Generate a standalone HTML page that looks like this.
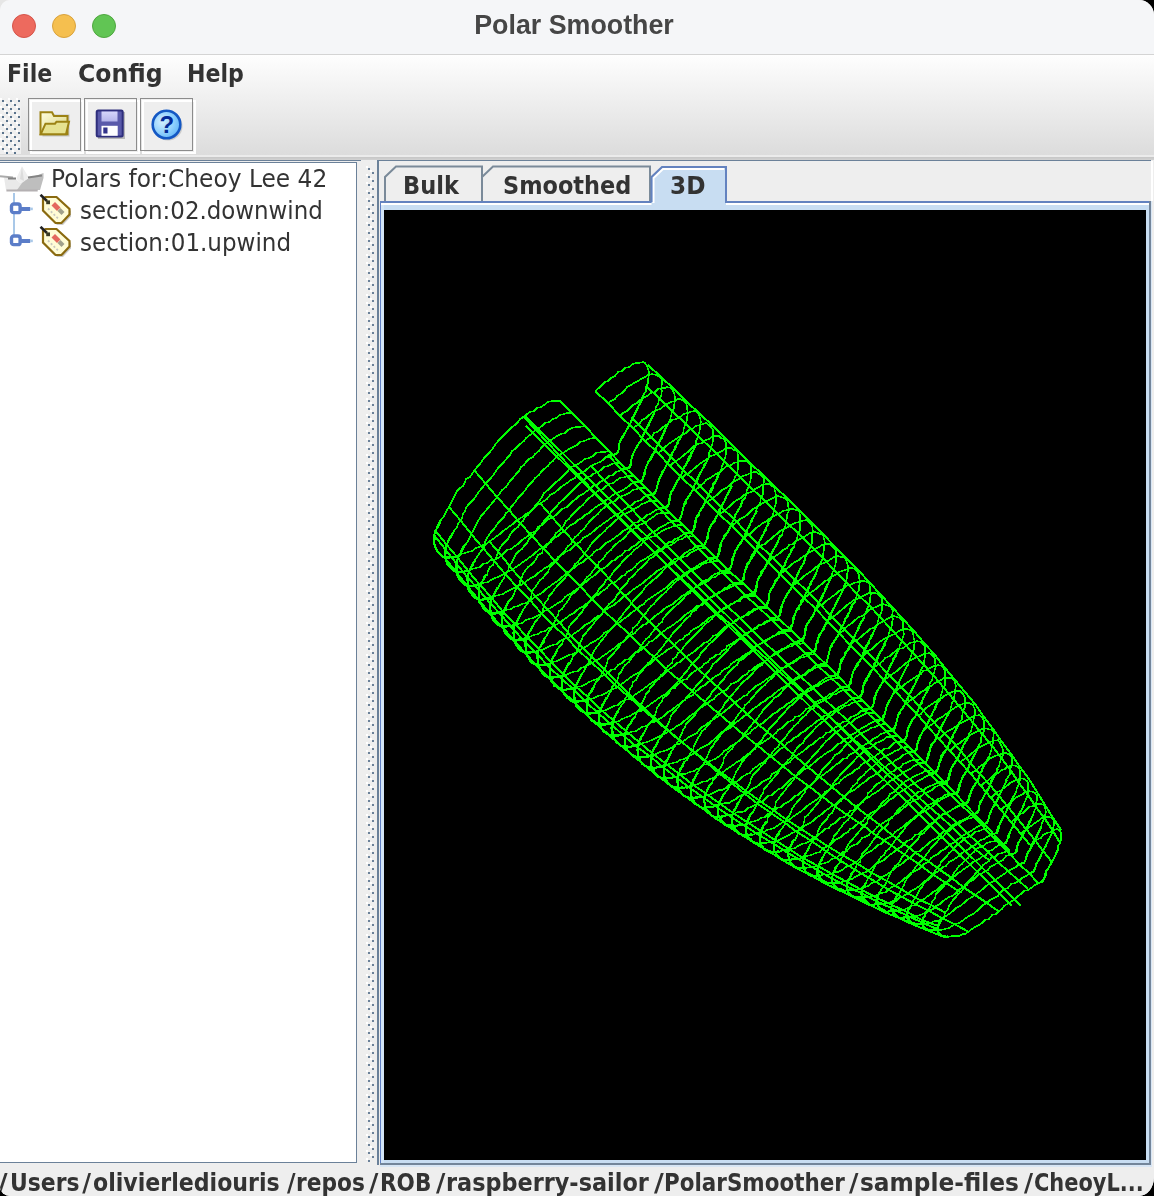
<!DOCTYPE html>
<html><head><meta charset="utf-8"><title>Polar Smoother</title>
<style>
html,body{margin:0;padding:0;}
body{width:1154px;height:1196px;overflow:hidden;background:#000;position:relative;font-family:"DejaVu Sans","Liberation Sans",sans-serif;color:#333;}
#win{position:absolute;left:0;top:0;width:1154px;height:1196px;background:#eee;border-radius:10px 15px 15px 10px / 10px 15px 19px 9px;overflow:hidden;}
#tl{position:absolute;left:0;top:0;width:40px;height:40px;background:#e6e6e6;}
.abs{position:absolute;}
#title{left:0;top:0;width:1154px;height:54px;background:#f5f6f8;border-bottom:1px solid #d4d4d4;}
#title .t{position:absolute;left:0;width:1148px;top:9px;text-align:center;font:bold 26.8px/32px "Liberation Sans",sans-serif;color:#464646;filter:grayscale(1);}
.dot{position:absolute;top:14px;width:24px;height:24px;border-radius:50%;box-sizing:border-box;}
#grad{left:0;top:55px;width:1154px;height:100px;background:linear-gradient(#fefefe 0%,#dcdcdc 100%);}
#menubar{left:0;top:55px;width:1154px;height:40px;}
.mi{position:absolute;top:3px;filter:grayscale(1);font-weight:bold;font-size:24px;line-height:32px;white-space:nowrap;transform-origin:0 50%;}
#toolbar{left:0;top:95px;width:1154px;height:61px;}
.tbw{position:absolute;top:4.5px;width:54px;height:54px;box-sizing:border-box;border:2px solid #fff;background:#eee;}
.tb{position:absolute;top:3px;width:53px;height:53px;box-sizing:border-box;border:1.5px solid #8c8c8c;}
.tb svg{position:absolute;left:0;top:0;}
#tree{left:0;top:163px;width:356px;height:999px;background:#fff;border-right:1px solid #6b8199;border-bottom:1px solid #6b8199;}
.row{filter:grayscale(1);position:absolute;left:0;height:32px;font-size:24px;line-height:32px;white-space:nowrap;transform-origin:0 50%;}
#status{left:0;top:1167px;width:1154px;height:29px;background:#eee;}
#status .w{position:absolute;top:0px;filter:grayscale(1);font-weight:bold;font-size:24px;line-height:32px;white-space:nowrap;transform-origin:0 50%;}
.tabtxt{filter:grayscale(1);position:absolute;top:170px;font-weight:bold;font-size:24px;line-height:32px;white-space:nowrap;transform-origin:0 50%;}
</style></head><body>
<div id="tl"></div>
<div id="win">
<div id="title" class="abs">
 <div class="dot" style="left:12px;background:#ed6a5e;border:1px solid #d5544a;"></div>
 <div class="dot" style="left:52px;background:#f5bf4f;border:1px solid #d9a23c;"></div>
 <div class="dot" style="left:92px;background:#61c554;border:1px solid #4ea73f;"></div>
 <div class="t">Polar Smoother</div>
</div>
<div id="grad" class="abs"></div>
<div id="menubar" class="abs">
 <span class="mi" id="m1" style="left:7.48px;transform:scaleX(0.919);">File</span>
 <span class="mi" id="m2" style="left:77.72px;transform:scaleX(0.9807);">Config</span>
 <span class="mi" id="m3" style="left:187.18px;transform:scaleX(0.9197);">Help</span>
</div>
<div id="toolbar" class="abs">
 <div class="abs" style="left:0;top:3px;width:21px;height:56px;background:#efefef;"></div><svg class="abs" style="left:0;top:3px" width="22" height="60" viewBox="0 0 22 60"><g><rect x="0" y="0" width="2" height="2" fill="#fff"/><rect x="2" y="2" width="2" height="2" fill="#5a738c"/><rect x="8" y="0" width="2" height="2" fill="#fff"/><rect x="10" y="2" width="2" height="2" fill="#5a738c"/><rect x="16" y="0" width="2" height="2" fill="#fff"/><rect x="18" y="2" width="2" height="2" fill="#5a738c"/><rect x="4" y="4" width="2" height="2" fill="#fff"/><rect x="6" y="6" width="2" height="2" fill="#5a738c"/><rect x="12" y="4" width="2" height="2" fill="#fff"/><rect x="14" y="6" width="2" height="2" fill="#5a738c"/><rect x="0" y="8" width="2" height="2" fill="#fff"/><rect x="2" y="10" width="2" height="2" fill="#5a738c"/><rect x="8" y="8" width="2" height="2" fill="#fff"/><rect x="10" y="10" width="2" height="2" fill="#5a738c"/><rect x="16" y="8" width="2" height="2" fill="#fff"/><rect x="18" y="10" width="2" height="2" fill="#5a738c"/><rect x="4" y="12" width="2" height="2" fill="#fff"/><rect x="6" y="14" width="2" height="2" fill="#5a738c"/><rect x="12" y="12" width="2" height="2" fill="#fff"/><rect x="14" y="14" width="2" height="2" fill="#5a738c"/><rect x="0" y="16" width="2" height="2" fill="#fff"/><rect x="2" y="18" width="2" height="2" fill="#5a738c"/><rect x="8" y="16" width="2" height="2" fill="#fff"/><rect x="10" y="18" width="2" height="2" fill="#5a738c"/><rect x="16" y="16" width="2" height="2" fill="#fff"/><rect x="18" y="18" width="2" height="2" fill="#5a738c"/><rect x="4" y="20" width="2" height="2" fill="#fff"/><rect x="6" y="22" width="2" height="2" fill="#5a738c"/><rect x="12" y="20" width="2" height="2" fill="#fff"/><rect x="14" y="22" width="2" height="2" fill="#5a738c"/><rect x="0" y="24" width="2" height="2" fill="#fff"/><rect x="2" y="26" width="2" height="2" fill="#5a738c"/><rect x="8" y="24" width="2" height="2" fill="#fff"/><rect x="10" y="26" width="2" height="2" fill="#5a738c"/><rect x="16" y="24" width="2" height="2" fill="#fff"/><rect x="18" y="26" width="2" height="2" fill="#5a738c"/><rect x="4" y="28" width="2" height="2" fill="#fff"/><rect x="6" y="30" width="2" height="2" fill="#5a738c"/><rect x="12" y="28" width="2" height="2" fill="#fff"/><rect x="14" y="30" width="2" height="2" fill="#5a738c"/><rect x="0" y="32" width="2" height="2" fill="#fff"/><rect x="2" y="34" width="2" height="2" fill="#5a738c"/><rect x="8" y="32" width="2" height="2" fill="#fff"/><rect x="10" y="34" width="2" height="2" fill="#5a738c"/><rect x="16" y="32" width="2" height="2" fill="#fff"/><rect x="18" y="34" width="2" height="2" fill="#5a738c"/><rect x="4" y="36" width="2" height="2" fill="#fff"/><rect x="6" y="38" width="2" height="2" fill="#5a738c"/><rect x="12" y="36" width="2" height="2" fill="#fff"/><rect x="14" y="38" width="2" height="2" fill="#5a738c"/><rect x="0" y="40" width="2" height="2" fill="#fff"/><rect x="2" y="42" width="2" height="2" fill="#5a738c"/><rect x="8" y="40" width="2" height="2" fill="#fff"/><rect x="10" y="42" width="2" height="2" fill="#5a738c"/><rect x="16" y="40" width="2" height="2" fill="#fff"/><rect x="18" y="42" width="2" height="2" fill="#5a738c"/><rect x="4" y="44" width="2" height="2" fill="#fff"/><rect x="6" y="46" width="2" height="2" fill="#5a738c"/><rect x="12" y="44" width="2" height="2" fill="#fff"/><rect x="14" y="46" width="2" height="2" fill="#5a738c"/><rect x="0" y="48" width="2" height="2" fill="#fff"/><rect x="2" y="50" width="2" height="2" fill="#5a738c"/><rect x="8" y="48" width="2" height="2" fill="#fff"/><rect x="10" y="50" width="2" height="2" fill="#5a738c"/><rect x="16" y="48" width="2" height="2" fill="#fff"/><rect x="18" y="50" width="2" height="2" fill="#5a738c"/><rect x="4" y="52" width="2" height="2" fill="#fff"/><rect x="6" y="54" width="2" height="2" fill="#5a738c"/><rect x="12" y="52" width="2" height="2" fill="#fff"/><rect x="14" y="54" width="2" height="2" fill="#5a738c"/></g></svg>
 <div class="tbw" style="left:29.5px;"></div><div class="tb" style="left:28px;"><svg width="50" height="50" viewBox="1.5 1.5 50 50">
  <defs><linearGradient id="fg" x1="0" y1="0" x2="1" y2="1"><stop offset="0" stop-color="#fffde0"/><stop offset="1" stop-color="#d8d47c"/></linearGradient></defs>
  <path d="M15 17 h27 v22 h-27 z" fill="#777" opacity=".35"/>
  <path d="M13 14.8 h11.5 l2 3.6 h13.5 v18.4 h-27 z" fill="url(#fg)" stroke="#9c8214" stroke-width="2" stroke-linejoin="miter"/>
  <path d="M18 26.2 L27.5 26.2 L29 24.2 L41.5 24.2 L38.5 36.8 L13.2 36.8 Z" fill="#e6e290" stroke="#9c8214" stroke-width="2" stroke-linejoin="miter"/>
 </svg></div>
 <div class="tbw" style="left:85.5px;"></div><div class="tb" style="left:84px;"><svg width="50" height="50" viewBox="1.5 1.5 50 50">
  <defs><linearGradient id="lg" x1="0" y1="0" x2="0" y2="1"><stop offset="0" stop-color="#d6d6fa"/><stop offset="1" stop-color="#b4b4ea"/></linearGradient></defs>
  <rect x="14.5" y="14.5" width="27" height="27" fill="#666" opacity=".4"/>
  <rect x="13.2" y="13" width="26" height="26" rx="1.5" fill="#5a5aaa" stroke="#2e2e7c" stroke-width="2"/>
  <rect x="18" y="14" width="16" height="10" fill="url(#lg)"/>
  <rect x="18" y="28.3" width="16.2" height="10" fill="#ffffff"/>
  <rect x="19.8" y="30" width="4.2" height="6" fill="#33338a"/>
 </svg></div>
 <div class="tbw" style="left:141.5px;"></div><div class="tb" style="left:140px;"><svg width="50" height="50" viewBox="1.5 1.5 50 50">
  <defs><radialGradient id="hg" cx="35%" cy="40%" r="75%"><stop offset="0" stop-color="#d4efff"/><stop offset=".55" stop-color="#8fd0fd"/><stop offset="1" stop-color="#5ab0f6"/></radialGradient></defs>
  <ellipse cx="28.5" cy="28.5" rx="14.5" ry="14.5" fill="#777" opacity=".3"/>
  <circle cx="27" cy="27" r="13.8" fill="url(#hg)" stroke="#1458c4" stroke-width="2.6"/>
  <text x="27.3" y="35.3" text-anchor="middle" font-family="Liberation Sans,sans-serif" font-weight="bold" font-size="24" fill="#022a98">?</text>
 </svg></div>
</div>
<!-- separators under toolbar -->
<div class="abs" style="left:0;top:155px;width:1154px;height:2px;background:#ebebeb;"></div>
<div class="abs" style="left:0;top:157px;width:1154px;height:3px;background:linear-gradient(#c6c6c6,#d2d2d2);"></div>
<div class="abs" style="left:0;top:160px;width:1154px;height:4px;background:#eee;"></div>
<div class="abs" style="left:0;top:160px;width:361px;height:1px;background:#6b8199;"></div>
<div class="abs" style="left:377px;top:160px;width:774px;height:1px;background:#6b8199;"></div>
<div class="abs" style="left:0;top:162px;width:357px;height:1px;background:#6b8199;"></div>
<div id="tree" class="abs">
 <!-- boat icon -->
 <svg class="abs" style="left:0;top:2px" width="46" height="28" viewBox="0 0 46 28">
  <path d="M4 12.5 L16 14 L20 18 L28 14 L43 11 L40 25 L6 25 Z" fill="#e9e9e9"/>
  <path d="M22 1.2 L16.5 13 L19 18 L24 17 L28.5 12 Z" fill="#eeeeee"/>
  <path d="M22 1.2 L20 14 L24 16 Z" fill="#dcdcdc"/>
  <path d="M22 18 L28 13.5 L43.5 8 L43.5 13 L40 25 L17 25 Z" fill="#bebebe"/>
  <path d="M0 11.2 L13 12.6" stroke="#ababab" stroke-width="2"/>
  <path d="M8 13.4 L16 13.6 M28 12.6 L42 10.4" stroke="#848484" stroke-width="2"/>
  <path d="M6.4 25.5 L37.7 25.5" stroke="#b4b0b2" stroke-width="1.8"/>
 </svg>
 <!-- tree lines -->
 <div class="abs" style="left:13px;top:30px;width:2px;height:44px;background:#a9c8e8;"></div>
 <svg class="abs" style="left:8px;top:39px" width="26" height="16" viewBox="0 0 26 16"><use href="#hdl"/></svg>
 <svg class="abs" style="left:8px;top:71px" width="26" height="16" viewBox="0 0 26 16"><use href="#hdl"/></svg>
 <!-- tag icons -->
 <svg class="abs" style="left:38px;top:31px" width="36" height="34" viewBox="0 0 36 34"><use href="#tag"/></svg>
 <svg class="abs" style="left:38px;top:63px" width="36" height="34" viewBox="0 0 36 34"><use href="#tag"/></svg>
 <div class="row" id="r1" style="left:51.37px;top:0px;transform:scaleX(0.9721);">Polars for:Cheoy Lee 42</div>
 <div class="row" id="r2" style="left:80.46px;top:32px;transform:scaleX(0.9553);">section:02.downwind</div>
 <div class="row" id="r3" style="left:80.45px;top:64px;transform:scaleX(0.9598);">section:01.upwind</div>
</div>
<svg width="0" height="0" style="position:absolute"><defs>
 <g id="tag">
  <path d="M9 5 L20 5 L33 17 L33 22.5 L25 31 L19 31 L7 19 L7 7 Z" fill="#8c8c8c" opacity=".45"/>
  <path d="M7.7 3 L18.5 3 L31.5 15 L31.5 20.5 L23.5 29 L17.5 29 L5 16.5 L5 4.5 Z" fill="#fffcd6" stroke="#8a6a10" stroke-width="2.2" stroke-linejoin="miter"/>
  <path d="M2.5 0.8 L9 7" stroke="#222" stroke-width="2.6"/>
  <rect x="8.2" y="6.4" width="3.8" height="3.8" fill="#3a3a24"/>
  <path d="M17 8 L22.5 13.5 L19 17 L13.5 11.5 Z" fill="#e4685e"/>
  <path d="M22.5 14 L26.5 18 L23.5 21 L19.5 17 Z" fill="#a0a08c"/>
  <path d="M10 14.5 L20 24.5" stroke="#c8c8c0" stroke-width="1.8" stroke-dasharray="2 2"/>
 </g>
 <g id="hdl">
  <rect x="3.5" y="2" width="8.6" height="8.6" rx="2.2" fill="#fff" stroke="#5b7dc8" stroke-width="3.4"/>
  <rect x="12" y="5" width="10.2" height="4" fill="#5b7dc8"/>
  <rect x="22.2" y="5.6" width="2.6" height="2.6" fill="#a9c8e8"/>
 </g>
</defs></svg>
<!-- split divider -->
<div class="abs" style="left:357px;top:163px;width:21px;height:1000px;background:#eee;"></div>
<svg class="abs" style="left:365px;top:166px" width="12" height="996" viewBox="0 0 12 996"><g><rect x="1" y="0" width="2" height="2" fill="#fff"/><rect x="3" y="2" width="2" height="2" fill="#6b8199"/><rect x="5" y="4" width="2" height="2" fill="#fff"/><rect x="7" y="6" width="2" height="2" fill="#6b8199"/><rect x="1" y="8" width="2" height="2" fill="#fff"/><rect x="3" y="10" width="2" height="2" fill="#6b8199"/><rect x="5" y="12" width="2" height="2" fill="#fff"/><rect x="7" y="14" width="2" height="2" fill="#6b8199"/><rect x="1" y="16" width="2" height="2" fill="#fff"/><rect x="3" y="18" width="2" height="2" fill="#6b8199"/><rect x="5" y="20" width="2" height="2" fill="#fff"/><rect x="7" y="22" width="2" height="2" fill="#6b8199"/><rect x="1" y="24" width="2" height="2" fill="#fff"/><rect x="3" y="26" width="2" height="2" fill="#6b8199"/><rect x="5" y="28" width="2" height="2" fill="#fff"/><rect x="7" y="30" width="2" height="2" fill="#6b8199"/><rect x="1" y="32" width="2" height="2" fill="#fff"/><rect x="3" y="34" width="2" height="2" fill="#6b8199"/><rect x="5" y="36" width="2" height="2" fill="#fff"/><rect x="7" y="38" width="2" height="2" fill="#6b8199"/><rect x="1" y="40" width="2" height="2" fill="#fff"/><rect x="3" y="42" width="2" height="2" fill="#6b8199"/><rect x="5" y="44" width="2" height="2" fill="#fff"/><rect x="7" y="46" width="2" height="2" fill="#6b8199"/><rect x="1" y="48" width="2" height="2" fill="#fff"/><rect x="3" y="50" width="2" height="2" fill="#6b8199"/><rect x="5" y="52" width="2" height="2" fill="#fff"/><rect x="7" y="54" width="2" height="2" fill="#6b8199"/><rect x="1" y="56" width="2" height="2" fill="#fff"/><rect x="3" y="58" width="2" height="2" fill="#6b8199"/><rect x="5" y="60" width="2" height="2" fill="#fff"/><rect x="7" y="62" width="2" height="2" fill="#6b8199"/><rect x="1" y="64" width="2" height="2" fill="#fff"/><rect x="3" y="66" width="2" height="2" fill="#6b8199"/><rect x="5" y="68" width="2" height="2" fill="#fff"/><rect x="7" y="70" width="2" height="2" fill="#6b8199"/><rect x="1" y="72" width="2" height="2" fill="#fff"/><rect x="3" y="74" width="2" height="2" fill="#6b8199"/><rect x="5" y="76" width="2" height="2" fill="#fff"/><rect x="7" y="78" width="2" height="2" fill="#6b8199"/><rect x="1" y="80" width="2" height="2" fill="#fff"/><rect x="3" y="82" width="2" height="2" fill="#6b8199"/><rect x="5" y="84" width="2" height="2" fill="#fff"/><rect x="7" y="86" width="2" height="2" fill="#6b8199"/><rect x="1" y="88" width="2" height="2" fill="#fff"/><rect x="3" y="90" width="2" height="2" fill="#6b8199"/><rect x="5" y="92" width="2" height="2" fill="#fff"/><rect x="7" y="94" width="2" height="2" fill="#6b8199"/><rect x="1" y="96" width="2" height="2" fill="#fff"/><rect x="3" y="98" width="2" height="2" fill="#6b8199"/><rect x="5" y="100" width="2" height="2" fill="#fff"/><rect x="7" y="102" width="2" height="2" fill="#6b8199"/><rect x="1" y="104" width="2" height="2" fill="#fff"/><rect x="3" y="106" width="2" height="2" fill="#6b8199"/><rect x="5" y="108" width="2" height="2" fill="#fff"/><rect x="7" y="110" width="2" height="2" fill="#6b8199"/><rect x="1" y="112" width="2" height="2" fill="#fff"/><rect x="3" y="114" width="2" height="2" fill="#6b8199"/><rect x="5" y="116" width="2" height="2" fill="#fff"/><rect x="7" y="118" width="2" height="2" fill="#6b8199"/><rect x="1" y="120" width="2" height="2" fill="#fff"/><rect x="3" y="122" width="2" height="2" fill="#6b8199"/><rect x="5" y="124" width="2" height="2" fill="#fff"/><rect x="7" y="126" width="2" height="2" fill="#6b8199"/><rect x="1" y="128" width="2" height="2" fill="#fff"/><rect x="3" y="130" width="2" height="2" fill="#6b8199"/><rect x="5" y="132" width="2" height="2" fill="#fff"/><rect x="7" y="134" width="2" height="2" fill="#6b8199"/><rect x="1" y="136" width="2" height="2" fill="#fff"/><rect x="3" y="138" width="2" height="2" fill="#6b8199"/><rect x="5" y="140" width="2" height="2" fill="#fff"/><rect x="7" y="142" width="2" height="2" fill="#6b8199"/><rect x="1" y="144" width="2" height="2" fill="#fff"/><rect x="3" y="146" width="2" height="2" fill="#6b8199"/><rect x="5" y="148" width="2" height="2" fill="#fff"/><rect x="7" y="150" width="2" height="2" fill="#6b8199"/><rect x="1" y="152" width="2" height="2" fill="#fff"/><rect x="3" y="154" width="2" height="2" fill="#6b8199"/><rect x="5" y="156" width="2" height="2" fill="#fff"/><rect x="7" y="158" width="2" height="2" fill="#6b8199"/><rect x="1" y="160" width="2" height="2" fill="#fff"/><rect x="3" y="162" width="2" height="2" fill="#6b8199"/><rect x="5" y="164" width="2" height="2" fill="#fff"/><rect x="7" y="166" width="2" height="2" fill="#6b8199"/><rect x="1" y="168" width="2" height="2" fill="#fff"/><rect x="3" y="170" width="2" height="2" fill="#6b8199"/><rect x="5" y="172" width="2" height="2" fill="#fff"/><rect x="7" y="174" width="2" height="2" fill="#6b8199"/><rect x="1" y="176" width="2" height="2" fill="#fff"/><rect x="3" y="178" width="2" height="2" fill="#6b8199"/><rect x="5" y="180" width="2" height="2" fill="#fff"/><rect x="7" y="182" width="2" height="2" fill="#6b8199"/><rect x="1" y="184" width="2" height="2" fill="#fff"/><rect x="3" y="186" width="2" height="2" fill="#6b8199"/><rect x="5" y="188" width="2" height="2" fill="#fff"/><rect x="7" y="190" width="2" height="2" fill="#6b8199"/><rect x="1" y="192" width="2" height="2" fill="#fff"/><rect x="3" y="194" width="2" height="2" fill="#6b8199"/><rect x="5" y="196" width="2" height="2" fill="#fff"/><rect x="7" y="198" width="2" height="2" fill="#6b8199"/><rect x="1" y="200" width="2" height="2" fill="#fff"/><rect x="3" y="202" width="2" height="2" fill="#6b8199"/><rect x="5" y="204" width="2" height="2" fill="#fff"/><rect x="7" y="206" width="2" height="2" fill="#6b8199"/><rect x="1" y="208" width="2" height="2" fill="#fff"/><rect x="3" y="210" width="2" height="2" fill="#6b8199"/><rect x="5" y="212" width="2" height="2" fill="#fff"/><rect x="7" y="214" width="2" height="2" fill="#6b8199"/><rect x="1" y="216" width="2" height="2" fill="#fff"/><rect x="3" y="218" width="2" height="2" fill="#6b8199"/><rect x="5" y="220" width="2" height="2" fill="#fff"/><rect x="7" y="222" width="2" height="2" fill="#6b8199"/><rect x="1" y="224" width="2" height="2" fill="#fff"/><rect x="3" y="226" width="2" height="2" fill="#6b8199"/><rect x="5" y="228" width="2" height="2" fill="#fff"/><rect x="7" y="230" width="2" height="2" fill="#6b8199"/><rect x="1" y="232" width="2" height="2" fill="#fff"/><rect x="3" y="234" width="2" height="2" fill="#6b8199"/><rect x="5" y="236" width="2" height="2" fill="#fff"/><rect x="7" y="238" width="2" height="2" fill="#6b8199"/><rect x="1" y="240" width="2" height="2" fill="#fff"/><rect x="3" y="242" width="2" height="2" fill="#6b8199"/><rect x="5" y="244" width="2" height="2" fill="#fff"/><rect x="7" y="246" width="2" height="2" fill="#6b8199"/><rect x="1" y="248" width="2" height="2" fill="#fff"/><rect x="3" y="250" width="2" height="2" fill="#6b8199"/><rect x="5" y="252" width="2" height="2" fill="#fff"/><rect x="7" y="254" width="2" height="2" fill="#6b8199"/><rect x="1" y="256" width="2" height="2" fill="#fff"/><rect x="3" y="258" width="2" height="2" fill="#6b8199"/><rect x="5" y="260" width="2" height="2" fill="#fff"/><rect x="7" y="262" width="2" height="2" fill="#6b8199"/><rect x="1" y="264" width="2" height="2" fill="#fff"/><rect x="3" y="266" width="2" height="2" fill="#6b8199"/><rect x="5" y="268" width="2" height="2" fill="#fff"/><rect x="7" y="270" width="2" height="2" fill="#6b8199"/><rect x="1" y="272" width="2" height="2" fill="#fff"/><rect x="3" y="274" width="2" height="2" fill="#6b8199"/><rect x="5" y="276" width="2" height="2" fill="#fff"/><rect x="7" y="278" width="2" height="2" fill="#6b8199"/><rect x="1" y="280" width="2" height="2" fill="#fff"/><rect x="3" y="282" width="2" height="2" fill="#6b8199"/><rect x="5" y="284" width="2" height="2" fill="#fff"/><rect x="7" y="286" width="2" height="2" fill="#6b8199"/><rect x="1" y="288" width="2" height="2" fill="#fff"/><rect x="3" y="290" width="2" height="2" fill="#6b8199"/><rect x="5" y="292" width="2" height="2" fill="#fff"/><rect x="7" y="294" width="2" height="2" fill="#6b8199"/><rect x="1" y="296" width="2" height="2" fill="#fff"/><rect x="3" y="298" width="2" height="2" fill="#6b8199"/><rect x="5" y="300" width="2" height="2" fill="#fff"/><rect x="7" y="302" width="2" height="2" fill="#6b8199"/><rect x="1" y="304" width="2" height="2" fill="#fff"/><rect x="3" y="306" width="2" height="2" fill="#6b8199"/><rect x="5" y="308" width="2" height="2" fill="#fff"/><rect x="7" y="310" width="2" height="2" fill="#6b8199"/><rect x="1" y="312" width="2" height="2" fill="#fff"/><rect x="3" y="314" width="2" height="2" fill="#6b8199"/><rect x="5" y="316" width="2" height="2" fill="#fff"/><rect x="7" y="318" width="2" height="2" fill="#6b8199"/><rect x="1" y="320" width="2" height="2" fill="#fff"/><rect x="3" y="322" width="2" height="2" fill="#6b8199"/><rect x="5" y="324" width="2" height="2" fill="#fff"/><rect x="7" y="326" width="2" height="2" fill="#6b8199"/><rect x="1" y="328" width="2" height="2" fill="#fff"/><rect x="3" y="330" width="2" height="2" fill="#6b8199"/><rect x="5" y="332" width="2" height="2" fill="#fff"/><rect x="7" y="334" width="2" height="2" fill="#6b8199"/><rect x="1" y="336" width="2" height="2" fill="#fff"/><rect x="3" y="338" width="2" height="2" fill="#6b8199"/><rect x="5" y="340" width="2" height="2" fill="#fff"/><rect x="7" y="342" width="2" height="2" fill="#6b8199"/><rect x="1" y="344" width="2" height="2" fill="#fff"/><rect x="3" y="346" width="2" height="2" fill="#6b8199"/><rect x="5" y="348" width="2" height="2" fill="#fff"/><rect x="7" y="350" width="2" height="2" fill="#6b8199"/><rect x="1" y="352" width="2" height="2" fill="#fff"/><rect x="3" y="354" width="2" height="2" fill="#6b8199"/><rect x="5" y="356" width="2" height="2" fill="#fff"/><rect x="7" y="358" width="2" height="2" fill="#6b8199"/><rect x="1" y="360" width="2" height="2" fill="#fff"/><rect x="3" y="362" width="2" height="2" fill="#6b8199"/><rect x="5" y="364" width="2" height="2" fill="#fff"/><rect x="7" y="366" width="2" height="2" fill="#6b8199"/><rect x="1" y="368" width="2" height="2" fill="#fff"/><rect x="3" y="370" width="2" height="2" fill="#6b8199"/><rect x="5" y="372" width="2" height="2" fill="#fff"/><rect x="7" y="374" width="2" height="2" fill="#6b8199"/><rect x="1" y="376" width="2" height="2" fill="#fff"/><rect x="3" y="378" width="2" height="2" fill="#6b8199"/><rect x="5" y="380" width="2" height="2" fill="#fff"/><rect x="7" y="382" width="2" height="2" fill="#6b8199"/><rect x="1" y="384" width="2" height="2" fill="#fff"/><rect x="3" y="386" width="2" height="2" fill="#6b8199"/><rect x="5" y="388" width="2" height="2" fill="#fff"/><rect x="7" y="390" width="2" height="2" fill="#6b8199"/><rect x="1" y="392" width="2" height="2" fill="#fff"/><rect x="3" y="394" width="2" height="2" fill="#6b8199"/><rect x="5" y="396" width="2" height="2" fill="#fff"/><rect x="7" y="398" width="2" height="2" fill="#6b8199"/><rect x="1" y="400" width="2" height="2" fill="#fff"/><rect x="3" y="402" width="2" height="2" fill="#6b8199"/><rect x="5" y="404" width="2" height="2" fill="#fff"/><rect x="7" y="406" width="2" height="2" fill="#6b8199"/><rect x="1" y="408" width="2" height="2" fill="#fff"/><rect x="3" y="410" width="2" height="2" fill="#6b8199"/><rect x="5" y="412" width="2" height="2" fill="#fff"/><rect x="7" y="414" width="2" height="2" fill="#6b8199"/><rect x="1" y="416" width="2" height="2" fill="#fff"/><rect x="3" y="418" width="2" height="2" fill="#6b8199"/><rect x="5" y="420" width="2" height="2" fill="#fff"/><rect x="7" y="422" width="2" height="2" fill="#6b8199"/><rect x="1" y="424" width="2" height="2" fill="#fff"/><rect x="3" y="426" width="2" height="2" fill="#6b8199"/><rect x="5" y="428" width="2" height="2" fill="#fff"/><rect x="7" y="430" width="2" height="2" fill="#6b8199"/><rect x="1" y="432" width="2" height="2" fill="#fff"/><rect x="3" y="434" width="2" height="2" fill="#6b8199"/><rect x="5" y="436" width="2" height="2" fill="#fff"/><rect x="7" y="438" width="2" height="2" fill="#6b8199"/><rect x="1" y="440" width="2" height="2" fill="#fff"/><rect x="3" y="442" width="2" height="2" fill="#6b8199"/><rect x="5" y="444" width="2" height="2" fill="#fff"/><rect x="7" y="446" width="2" height="2" fill="#6b8199"/><rect x="1" y="448" width="2" height="2" fill="#fff"/><rect x="3" y="450" width="2" height="2" fill="#6b8199"/><rect x="5" y="452" width="2" height="2" fill="#fff"/><rect x="7" y="454" width="2" height="2" fill="#6b8199"/><rect x="1" y="456" width="2" height="2" fill="#fff"/><rect x="3" y="458" width="2" height="2" fill="#6b8199"/><rect x="5" y="460" width="2" height="2" fill="#fff"/><rect x="7" y="462" width="2" height="2" fill="#6b8199"/><rect x="1" y="464" width="2" height="2" fill="#fff"/><rect x="3" y="466" width="2" height="2" fill="#6b8199"/><rect x="5" y="468" width="2" height="2" fill="#fff"/><rect x="7" y="470" width="2" height="2" fill="#6b8199"/><rect x="1" y="472" width="2" height="2" fill="#fff"/><rect x="3" y="474" width="2" height="2" fill="#6b8199"/><rect x="5" y="476" width="2" height="2" fill="#fff"/><rect x="7" y="478" width="2" height="2" fill="#6b8199"/><rect x="1" y="480" width="2" height="2" fill="#fff"/><rect x="3" y="482" width="2" height="2" fill="#6b8199"/><rect x="5" y="484" width="2" height="2" fill="#fff"/><rect x="7" y="486" width="2" height="2" fill="#6b8199"/><rect x="1" y="488" width="2" height="2" fill="#fff"/><rect x="3" y="490" width="2" height="2" fill="#6b8199"/><rect x="5" y="492" width="2" height="2" fill="#fff"/><rect x="7" y="494" width="2" height="2" fill="#6b8199"/><rect x="1" y="496" width="2" height="2" fill="#fff"/><rect x="3" y="498" width="2" height="2" fill="#6b8199"/><rect x="5" y="500" width="2" height="2" fill="#fff"/><rect x="7" y="502" width="2" height="2" fill="#6b8199"/><rect x="1" y="504" width="2" height="2" fill="#fff"/><rect x="3" y="506" width="2" height="2" fill="#6b8199"/><rect x="5" y="508" width="2" height="2" fill="#fff"/><rect x="7" y="510" width="2" height="2" fill="#6b8199"/><rect x="1" y="512" width="2" height="2" fill="#fff"/><rect x="3" y="514" width="2" height="2" fill="#6b8199"/><rect x="5" y="516" width="2" height="2" fill="#fff"/><rect x="7" y="518" width="2" height="2" fill="#6b8199"/><rect x="1" y="520" width="2" height="2" fill="#fff"/><rect x="3" y="522" width="2" height="2" fill="#6b8199"/><rect x="5" y="524" width="2" height="2" fill="#fff"/><rect x="7" y="526" width="2" height="2" fill="#6b8199"/><rect x="1" y="528" width="2" height="2" fill="#fff"/><rect x="3" y="530" width="2" height="2" fill="#6b8199"/><rect x="5" y="532" width="2" height="2" fill="#fff"/><rect x="7" y="534" width="2" height="2" fill="#6b8199"/><rect x="1" y="536" width="2" height="2" fill="#fff"/><rect x="3" y="538" width="2" height="2" fill="#6b8199"/><rect x="5" y="540" width="2" height="2" fill="#fff"/><rect x="7" y="542" width="2" height="2" fill="#6b8199"/><rect x="1" y="544" width="2" height="2" fill="#fff"/><rect x="3" y="546" width="2" height="2" fill="#6b8199"/><rect x="5" y="548" width="2" height="2" fill="#fff"/><rect x="7" y="550" width="2" height="2" fill="#6b8199"/><rect x="1" y="552" width="2" height="2" fill="#fff"/><rect x="3" y="554" width="2" height="2" fill="#6b8199"/><rect x="5" y="556" width="2" height="2" fill="#fff"/><rect x="7" y="558" width="2" height="2" fill="#6b8199"/><rect x="1" y="560" width="2" height="2" fill="#fff"/><rect x="3" y="562" width="2" height="2" fill="#6b8199"/><rect x="5" y="564" width="2" height="2" fill="#fff"/><rect x="7" y="566" width="2" height="2" fill="#6b8199"/><rect x="1" y="568" width="2" height="2" fill="#fff"/><rect x="3" y="570" width="2" height="2" fill="#6b8199"/><rect x="5" y="572" width="2" height="2" fill="#fff"/><rect x="7" y="574" width="2" height="2" fill="#6b8199"/><rect x="1" y="576" width="2" height="2" fill="#fff"/><rect x="3" y="578" width="2" height="2" fill="#6b8199"/><rect x="5" y="580" width="2" height="2" fill="#fff"/><rect x="7" y="582" width="2" height="2" fill="#6b8199"/><rect x="1" y="584" width="2" height="2" fill="#fff"/><rect x="3" y="586" width="2" height="2" fill="#6b8199"/><rect x="5" y="588" width="2" height="2" fill="#fff"/><rect x="7" y="590" width="2" height="2" fill="#6b8199"/><rect x="1" y="592" width="2" height="2" fill="#fff"/><rect x="3" y="594" width="2" height="2" fill="#6b8199"/><rect x="5" y="596" width="2" height="2" fill="#fff"/><rect x="7" y="598" width="2" height="2" fill="#6b8199"/><rect x="1" y="600" width="2" height="2" fill="#fff"/><rect x="3" y="602" width="2" height="2" fill="#6b8199"/><rect x="5" y="604" width="2" height="2" fill="#fff"/><rect x="7" y="606" width="2" height="2" fill="#6b8199"/><rect x="1" y="608" width="2" height="2" fill="#fff"/><rect x="3" y="610" width="2" height="2" fill="#6b8199"/><rect x="5" y="612" width="2" height="2" fill="#fff"/><rect x="7" y="614" width="2" height="2" fill="#6b8199"/><rect x="1" y="616" width="2" height="2" fill="#fff"/><rect x="3" y="618" width="2" height="2" fill="#6b8199"/><rect x="5" y="620" width="2" height="2" fill="#fff"/><rect x="7" y="622" width="2" height="2" fill="#6b8199"/><rect x="1" y="624" width="2" height="2" fill="#fff"/><rect x="3" y="626" width="2" height="2" fill="#6b8199"/><rect x="5" y="628" width="2" height="2" fill="#fff"/><rect x="7" y="630" width="2" height="2" fill="#6b8199"/><rect x="1" y="632" width="2" height="2" fill="#fff"/><rect x="3" y="634" width="2" height="2" fill="#6b8199"/><rect x="5" y="636" width="2" height="2" fill="#fff"/><rect x="7" y="638" width="2" height="2" fill="#6b8199"/><rect x="1" y="640" width="2" height="2" fill="#fff"/><rect x="3" y="642" width="2" height="2" fill="#6b8199"/><rect x="5" y="644" width="2" height="2" fill="#fff"/><rect x="7" y="646" width="2" height="2" fill="#6b8199"/><rect x="1" y="648" width="2" height="2" fill="#fff"/><rect x="3" y="650" width="2" height="2" fill="#6b8199"/><rect x="5" y="652" width="2" height="2" fill="#fff"/><rect x="7" y="654" width="2" height="2" fill="#6b8199"/><rect x="1" y="656" width="2" height="2" fill="#fff"/><rect x="3" y="658" width="2" height="2" fill="#6b8199"/><rect x="5" y="660" width="2" height="2" fill="#fff"/><rect x="7" y="662" width="2" height="2" fill="#6b8199"/><rect x="1" y="664" width="2" height="2" fill="#fff"/><rect x="3" y="666" width="2" height="2" fill="#6b8199"/><rect x="5" y="668" width="2" height="2" fill="#fff"/><rect x="7" y="670" width="2" height="2" fill="#6b8199"/><rect x="1" y="672" width="2" height="2" fill="#fff"/><rect x="3" y="674" width="2" height="2" fill="#6b8199"/><rect x="5" y="676" width="2" height="2" fill="#fff"/><rect x="7" y="678" width="2" height="2" fill="#6b8199"/><rect x="1" y="680" width="2" height="2" fill="#fff"/><rect x="3" y="682" width="2" height="2" fill="#6b8199"/><rect x="5" y="684" width="2" height="2" fill="#fff"/><rect x="7" y="686" width="2" height="2" fill="#6b8199"/><rect x="1" y="688" width="2" height="2" fill="#fff"/><rect x="3" y="690" width="2" height="2" fill="#6b8199"/><rect x="5" y="692" width="2" height="2" fill="#fff"/><rect x="7" y="694" width="2" height="2" fill="#6b8199"/><rect x="1" y="696" width="2" height="2" fill="#fff"/><rect x="3" y="698" width="2" height="2" fill="#6b8199"/><rect x="5" y="700" width="2" height="2" fill="#fff"/><rect x="7" y="702" width="2" height="2" fill="#6b8199"/><rect x="1" y="704" width="2" height="2" fill="#fff"/><rect x="3" y="706" width="2" height="2" fill="#6b8199"/><rect x="5" y="708" width="2" height="2" fill="#fff"/><rect x="7" y="710" width="2" height="2" fill="#6b8199"/><rect x="1" y="712" width="2" height="2" fill="#fff"/><rect x="3" y="714" width="2" height="2" fill="#6b8199"/><rect x="5" y="716" width="2" height="2" fill="#fff"/><rect x="7" y="718" width="2" height="2" fill="#6b8199"/><rect x="1" y="720" width="2" height="2" fill="#fff"/><rect x="3" y="722" width="2" height="2" fill="#6b8199"/><rect x="5" y="724" width="2" height="2" fill="#fff"/><rect x="7" y="726" width="2" height="2" fill="#6b8199"/><rect x="1" y="728" width="2" height="2" fill="#fff"/><rect x="3" y="730" width="2" height="2" fill="#6b8199"/><rect x="5" y="732" width="2" height="2" fill="#fff"/><rect x="7" y="734" width="2" height="2" fill="#6b8199"/><rect x="1" y="736" width="2" height="2" fill="#fff"/><rect x="3" y="738" width="2" height="2" fill="#6b8199"/><rect x="5" y="740" width="2" height="2" fill="#fff"/><rect x="7" y="742" width="2" height="2" fill="#6b8199"/><rect x="1" y="744" width="2" height="2" fill="#fff"/><rect x="3" y="746" width="2" height="2" fill="#6b8199"/><rect x="5" y="748" width="2" height="2" fill="#fff"/><rect x="7" y="750" width="2" height="2" fill="#6b8199"/><rect x="1" y="752" width="2" height="2" fill="#fff"/><rect x="3" y="754" width="2" height="2" fill="#6b8199"/><rect x="5" y="756" width="2" height="2" fill="#fff"/><rect x="7" y="758" width="2" height="2" fill="#6b8199"/><rect x="1" y="760" width="2" height="2" fill="#fff"/><rect x="3" y="762" width="2" height="2" fill="#6b8199"/><rect x="5" y="764" width="2" height="2" fill="#fff"/><rect x="7" y="766" width="2" height="2" fill="#6b8199"/><rect x="1" y="768" width="2" height="2" fill="#fff"/><rect x="3" y="770" width="2" height="2" fill="#6b8199"/><rect x="5" y="772" width="2" height="2" fill="#fff"/><rect x="7" y="774" width="2" height="2" fill="#6b8199"/><rect x="1" y="776" width="2" height="2" fill="#fff"/><rect x="3" y="778" width="2" height="2" fill="#6b8199"/><rect x="5" y="780" width="2" height="2" fill="#fff"/><rect x="7" y="782" width="2" height="2" fill="#6b8199"/><rect x="1" y="784" width="2" height="2" fill="#fff"/><rect x="3" y="786" width="2" height="2" fill="#6b8199"/><rect x="5" y="788" width="2" height="2" fill="#fff"/><rect x="7" y="790" width="2" height="2" fill="#6b8199"/><rect x="1" y="792" width="2" height="2" fill="#fff"/><rect x="3" y="794" width="2" height="2" fill="#6b8199"/><rect x="5" y="796" width="2" height="2" fill="#fff"/><rect x="7" y="798" width="2" height="2" fill="#6b8199"/><rect x="1" y="800" width="2" height="2" fill="#fff"/><rect x="3" y="802" width="2" height="2" fill="#6b8199"/><rect x="5" y="804" width="2" height="2" fill="#fff"/><rect x="7" y="806" width="2" height="2" fill="#6b8199"/><rect x="1" y="808" width="2" height="2" fill="#fff"/><rect x="3" y="810" width="2" height="2" fill="#6b8199"/><rect x="5" y="812" width="2" height="2" fill="#fff"/><rect x="7" y="814" width="2" height="2" fill="#6b8199"/><rect x="1" y="816" width="2" height="2" fill="#fff"/><rect x="3" y="818" width="2" height="2" fill="#6b8199"/><rect x="5" y="820" width="2" height="2" fill="#fff"/><rect x="7" y="822" width="2" height="2" fill="#6b8199"/><rect x="1" y="824" width="2" height="2" fill="#fff"/><rect x="3" y="826" width="2" height="2" fill="#6b8199"/><rect x="5" y="828" width="2" height="2" fill="#fff"/><rect x="7" y="830" width="2" height="2" fill="#6b8199"/><rect x="1" y="832" width="2" height="2" fill="#fff"/><rect x="3" y="834" width="2" height="2" fill="#6b8199"/><rect x="5" y="836" width="2" height="2" fill="#fff"/><rect x="7" y="838" width="2" height="2" fill="#6b8199"/><rect x="1" y="840" width="2" height="2" fill="#fff"/><rect x="3" y="842" width="2" height="2" fill="#6b8199"/><rect x="5" y="844" width="2" height="2" fill="#fff"/><rect x="7" y="846" width="2" height="2" fill="#6b8199"/><rect x="1" y="848" width="2" height="2" fill="#fff"/><rect x="3" y="850" width="2" height="2" fill="#6b8199"/><rect x="5" y="852" width="2" height="2" fill="#fff"/><rect x="7" y="854" width="2" height="2" fill="#6b8199"/><rect x="1" y="856" width="2" height="2" fill="#fff"/><rect x="3" y="858" width="2" height="2" fill="#6b8199"/><rect x="5" y="860" width="2" height="2" fill="#fff"/><rect x="7" y="862" width="2" height="2" fill="#6b8199"/><rect x="1" y="864" width="2" height="2" fill="#fff"/><rect x="3" y="866" width="2" height="2" fill="#6b8199"/><rect x="5" y="868" width="2" height="2" fill="#fff"/><rect x="7" y="870" width="2" height="2" fill="#6b8199"/><rect x="1" y="872" width="2" height="2" fill="#fff"/><rect x="3" y="874" width="2" height="2" fill="#6b8199"/><rect x="5" y="876" width="2" height="2" fill="#fff"/><rect x="7" y="878" width="2" height="2" fill="#6b8199"/><rect x="1" y="880" width="2" height="2" fill="#fff"/><rect x="3" y="882" width="2" height="2" fill="#6b8199"/><rect x="5" y="884" width="2" height="2" fill="#fff"/><rect x="7" y="886" width="2" height="2" fill="#6b8199"/><rect x="1" y="888" width="2" height="2" fill="#fff"/><rect x="3" y="890" width="2" height="2" fill="#6b8199"/><rect x="5" y="892" width="2" height="2" fill="#fff"/><rect x="7" y="894" width="2" height="2" fill="#6b8199"/><rect x="1" y="896" width="2" height="2" fill="#fff"/><rect x="3" y="898" width="2" height="2" fill="#6b8199"/><rect x="5" y="900" width="2" height="2" fill="#fff"/><rect x="7" y="902" width="2" height="2" fill="#6b8199"/><rect x="1" y="904" width="2" height="2" fill="#fff"/><rect x="3" y="906" width="2" height="2" fill="#6b8199"/><rect x="5" y="908" width="2" height="2" fill="#fff"/><rect x="7" y="910" width="2" height="2" fill="#6b8199"/><rect x="1" y="912" width="2" height="2" fill="#fff"/><rect x="3" y="914" width="2" height="2" fill="#6b8199"/><rect x="5" y="916" width="2" height="2" fill="#fff"/><rect x="7" y="918" width="2" height="2" fill="#6b8199"/><rect x="1" y="920" width="2" height="2" fill="#fff"/><rect x="3" y="922" width="2" height="2" fill="#6b8199"/><rect x="5" y="924" width="2" height="2" fill="#fff"/><rect x="7" y="926" width="2" height="2" fill="#6b8199"/><rect x="1" y="928" width="2" height="2" fill="#fff"/><rect x="3" y="930" width="2" height="2" fill="#6b8199"/><rect x="5" y="932" width="2" height="2" fill="#fff"/><rect x="7" y="934" width="2" height="2" fill="#6b8199"/><rect x="1" y="936" width="2" height="2" fill="#fff"/><rect x="3" y="938" width="2" height="2" fill="#6b8199"/><rect x="5" y="940" width="2" height="2" fill="#fff"/><rect x="7" y="942" width="2" height="2" fill="#6b8199"/><rect x="1" y="944" width="2" height="2" fill="#fff"/><rect x="3" y="946" width="2" height="2" fill="#6b8199"/><rect x="5" y="948" width="2" height="2" fill="#fff"/><rect x="7" y="950" width="2" height="2" fill="#6b8199"/><rect x="1" y="952" width="2" height="2" fill="#fff"/><rect x="3" y="954" width="2" height="2" fill="#6b8199"/><rect x="5" y="956" width="2" height="2" fill="#fff"/><rect x="7" y="958" width="2" height="2" fill="#6b8199"/><rect x="1" y="960" width="2" height="2" fill="#fff"/><rect x="3" y="962" width="2" height="2" fill="#6b8199"/><rect x="5" y="964" width="2" height="2" fill="#fff"/><rect x="7" y="966" width="2" height="2" fill="#6b8199"/><rect x="1" y="968" width="2" height="2" fill="#fff"/><rect x="3" y="970" width="2" height="2" fill="#6b8199"/><rect x="5" y="972" width="2" height="2" fill="#fff"/><rect x="7" y="974" width="2" height="2" fill="#6b8199"/><rect x="1" y="976" width="2" height="2" fill="#fff"/><rect x="3" y="978" width="2" height="2" fill="#6b8199"/><rect x="5" y="980" width="2" height="2" fill="#fff"/><rect x="7" y="982" width="2" height="2" fill="#6b8199"/><rect x="1" y="984" width="2" height="2" fill="#fff"/><rect x="3" y="986" width="2" height="2" fill="#6b8199"/><rect x="5" y="988" width="2" height="2" fill="#fff"/><rect x="7" y="990" width="2" height="2" fill="#6b8199"/><rect x="1" y="992" width="2" height="2" fill="#fff"/><rect x="3" y="994" width="2" height="2" fill="#6b8199"/></g></svg>
<!-- tabbed pane outer border -->
<div class="abs" style="left:377px;top:160px;width:1.5px;height:1005px;background:#6b8199;"></div>
<!-- content area -->
<div class="abs" style="left:380px;top:201px;width:772px;height:965.5px;background:#d8e6f5;"></div>
<div class="abs" style="left:380px;top:201px;width:771px;height:964px;background:#c8ddf2;"></div>
<div class="abs" style="left:381px;top:203px;width:3px;height:960px;background:#d3e5f7;"></div>
<div class="abs" style="left:380px;top:201px;width:769px;height:2px;background:#5876b8;"></div>
<div class="abs" style="left:381px;top:203px;width:768px;height:2px;background:#fff;"></div>
<div class="abs" style="left:380px;top:201px;width:1px;height:964px;background:#5f7fc4;"></div>
<div class="abs" style="left:1149px;top:201px;width:2px;height:964px;background:#73859a;"></div>
<div class="abs" style="left:380px;top:1163px;width:771px;height:2px;background:#73859a;"></div>
<div class="abs" style="left:1151px;top:161px;width:2px;height:40px;background:#fff;"></div>
<!-- tabs -->
<svg class="abs" style="left:380px;top:163px" width="774" height="42" viewBox="0 0 774 42">
 <!-- Bulk -->
 <path d="M5 39 L5 14 L16 3.5 L102 3.5 L102 39" fill="#eeeeee" stroke="#7a8a99" stroke-width="2"/>
 <!-- Smoothed -->
 <path d="M102 14 L113 3.5 L270 3.5 L270 39" fill="#eeeeee" stroke="#7a8a99" stroke-width="2"/>
 <!-- baseline left of selected -->
 <path d="M0 39 L272 39" stroke="#6382bf" stroke-width="2"/>
 <!-- 3D selected -->
 <path d="M271.5 42 L271.5 14 L282 4 L346 4 L346 42 Z" fill="#c8ddf2"/>
 <path d="M273.5 40 L273.5 15 L283 6 L344 6" fill="none" stroke="#fff" stroke-width="2"/>
 <path d="M271.5 39 L271.5 14 L282 4 L346 4 L346 39 L769 39" fill="none" stroke="#6382bf" stroke-width="2"/>
</svg>
<span class="tabtxt" id="t1" style="left:402.94px;transform:scaleX(0.9377);">Bulk</span>
<span class="tabtxt" id="t2" style="left:502.91px;transform:scaleX(0.9341);">Smoothed</span>
<span class="tabtxt" id="t3" style="left:670.45px;transform:scaleX(0.9675);">3D</span>
<!-- black canvas -->
<div class="abs" style="left:384px;top:210px;width:762px;height:950px;background:#000;"></div>
<svg class="abs" style="left:384px;top:210px" width="762" height="950" viewBox="384 210 762 950" shape-rendering="crispEdges"><path d="M560 401 L556 401 L552 401 L548 402 L544 405 L541 407 L537 408 L534 411 L530 412 L527 414 L524 417 L520 419 L518 422 L515 425 L512 427 L509 430 L506 433 L503 436 L501 438 L498 441 L495 445 L493 448 L490 452 L487 455 L484 458 L482 461 L480 464 L477 467 L474 471 L472 474 L470 477 L466 479 L465 482 L463 486 L460 488 L457 491 L455 495 L453 499 L451 503 L449 507 L447 510 L445 514 L444 516 L441 520 L440 523 L438 527 L435 531 L434 535 L435 539 L434 543 L435 546 L437 550 L439 553 L442 556 L445 557 L449 557 L453 557 L458 556 L461 554 L465 553 L468 552 L472 551 L476 548 L479 547 L483 545 L486 544 L490 541 L493 539 L497 536 L500 534 L503 531 L506 529 L510 526 L513 524 L516 521 L519 519 L524 516 L526 514 L530 512 L534 508 L536 506 L541 503 L544 501 L547 499 L550 495 L554 493 L558 490 L561 487 L564 485 L567 483 L571 480 L575 478 L577 475 L581 473 L585 471 L587 469 L591 466 L595 464 L600 462 L603 460 L606 457 L609 457 L613 455 L616 454 L618 451 L619 448 L619 444 L620 441 L623 437 L625 433 L627 429 L629 425 L631 422 L632 418 L634 416 L636 412 L638 408 L639 405 L640 402 L642 398 L644 394 L646 391 L646 387 L648 383 L648 379 L649 375 L649 372 L648 369 L647 366 L645 363 L643 362 L639 363 L636 363 L633 364 L629 367 L625 368 L622 371 L618 372 L615 376 L611 378 L608 381 L605 382 L602 385 L599 388 L595 391 M572 413 L567 413 L564 414 L560 415 L556 418 L553 419 L549 422 L545 423 L542 426 L539 428 L535 430 L533 433 L530 435 L526 438 L524 441 L520 444 L518 446 L515 449 L512 451 L510 455 L507 458 L504 462 L501 465 L498 468 L496 471 L494 474 L491 478 L488 481 L486 483 L483 487 L481 489 L478 493 L476 496 L474 499 L471 502 L468 505 L466 508 L465 511 L463 514 L462 518 L460 521 L458 524 L457 527 L454 531 L452 534 L451 537 L448 541 L447 545 L446 549 L446 553 L445 557 L446 561 L447 564 L450 567 L453 570 L457 571 L460 572 L465 571 L469 571 L472 569 L476 568 L480 567 L483 564 L487 563 L491 560 L494 560 L498 558 L501 556 L504 553 L507 550 L511 549 L515 546 L518 544 L522 540 L525 538 L528 536 L531 533 L536 531 L538 527 L542 525 L545 522 L549 519 L553 517 L556 515 L559 512 L562 509 L567 507 L570 504 L573 501 L576 499 L579 496 L583 494 L587 491 L590 489 L593 486 L597 485 L600 482 L604 480 L607 478 L609 476 L613 475 L616 472 L619 471 L621 470 L625 468 L629 467 L630 465 L631 462 L632 457 L633 454 L635 450 L637 447 L640 442 L642 439 L643 435 L645 431 L646 429 L649 425 L650 422 L652 418 L654 414 L655 411 L656 407 L658 404 L659 400 L661 396 L662 391 L661 389 L662 384 L662 380 L660 377 L658 376 L656 375 L652 374 L648 375 L645 377 L641 379 L638 381 L634 383 L631 385 L627 387 L625 390 L622 393 L617 396 L615 399 L611 401 L608 403 M585 426 L580 427 L576 427 L572 428 L568 430 L565 433 L561 434 L557 436 L554 438 L551 440 L548 442 L544 445 L541 448 L539 451 L535 454 L533 457 L529 459 L526 462 L524 465 L521 467 L519 471 L516 474 L513 478 L510 481 L508 484 L506 487 L502 490 L500 493 L497 497 L494 501 L492 503 L489 507 L487 509 L484 513 L481 516 L480 518 L478 521 L476 525 L474 529 L473 531 L471 534 L470 537 L468 541 L466 544 L463 547 L461 551 L460 555 L458 558 L457 562 L457 567 L457 571 L457 574 L459 578 L461 581 L464 584 L468 586 L472 586 L476 585 L479 585 L483 583 L488 582 L491 580 L495 578 L498 577 L502 575 L506 573 L509 571 L512 570 L516 567 L519 565 L523 562 L526 560 L530 557 L533 555 L536 552 L540 549 L544 547 L547 544 L551 542 L554 538 L558 536 L561 533 L565 531 L567 528 L571 525 L575 523 L578 520 L582 518 L585 515 L589 513 L592 510 L596 507 L599 505 L603 503 L606 500 L609 498 L613 495 L616 493 L619 492 L623 490 L626 488 L629 486 L631 484 L634 483 L638 481 L641 481 L643 478 L645 474 L645 470 L646 467 L648 462 L651 459 L653 455 L654 452 L656 448 L658 444 L660 441 L662 438 L663 435 L664 431 L666 427 L668 424 L670 420 L671 416 L672 412 L674 408 L674 405 L675 401 L675 397 L674 393 L673 391 L671 388 L667 387 L665 388 L662 388 L658 389 L655 392 L651 393 L647 396 L643 398 L640 400 L637 403 L633 405 L630 408 L627 411 L623 413 L620 416 M597 439 L593 438 L589 439 L584 441 L580 442 L577 445 L573 447 L569 449 L566 451 L563 453 L559 455 L556 457 L553 461 L550 463 L548 466 L544 469 L541 472 L539 475 L535 478 L533 481 L530 484 L528 486 L526 489 L523 493 L521 495 L518 498 L516 501 L513 505 L511 507 L509 511 L506 513 L504 517 L501 520 L498 523 L496 526 L494 529 L491 532 L489 535 L487 538 L485 542 L485 545 L483 549 L481 551 L479 554 L477 557 L475 560 L473 565 L471 568 L469 572 L467 577 L468 581 L468 584 L469 589 L470 592 L473 594 L476 597 L479 600 L483 599 L487 598 L492 598 L495 596 L499 595 L503 594 L506 592 L510 590 L514 588 L517 586 L521 585 L524 583 L528 580 L531 578 L535 576 L538 573 L541 571 L545 568 L549 566 L552 563 L556 560 L558 557 L563 554 L565 552 L570 550 L573 547 L576 544 L580 542 L583 538 L587 536 L590 534 L594 531 L597 528 L600 526 L604 523 L607 521 L611 518 L614 516 L618 514 L621 512 L625 509 L628 507 L632 505 L635 502 L638 501 L641 500 L644 497 L647 496 L651 495 L654 493 L656 491 L657 487 L658 484 L659 479 L661 475 L662 472 L665 468 L667 464 L669 460 L670 457 L672 453 L674 450 L675 447 L678 443 L679 440 L681 437 L683 433 L684 428 L685 425 L687 420 L687 417 L688 413 L687 409 L687 406 L686 403 L684 401 L680 399 L678 399 L675 401 L671 402 L667 404 L664 406 L660 409 L657 410 L653 412 L649 415 L646 418 L642 420 L640 423 L636 426 L633 428 M609 451 L605 452 L601 452 L596 453 L593 456 L589 458 L585 459 L581 462 L578 464 L574 466 L571 467 L568 471 L565 474 L562 477 L559 480 L556 482 L554 484 L550 488 L548 490 L544 493 L542 497 L540 500 L538 503 L535 506 L533 509 L530 512 L528 515 L525 517 L523 521 L520 523 L518 527 L515 529 L512 532 L510 535 L508 539 L505 542 L502 545 L500 548 L498 552 L497 555 L496 558 L494 561 L493 565 L490 567 L488 571 L487 575 L484 577 L482 582 L480 585 L479 590 L479 594 L479 597 L480 601 L482 605 L483 608 L487 611 L491 612 L494 613 L498 613 L503 611 L506 610 L511 609 L514 607 L518 606 L522 604 L526 603 L529 601 L532 599 L536 596 L540 594 L543 592 L546 589 L549 587 L553 584 L556 582 L559 580 L562 577 L565 575 L568 572 L571 570 L574 568 L576 566 L579 564 L583 562 L586 559 L589 557 L592 555 L594 552 L597 550 L600 549 L603 546 L606 543 L610 541 L613 539 L617 536 L620 534 L623 531 L627 529 L630 527 L634 523 L638 522 L641 519 L644 518 L647 515 L650 514 L653 512 L656 510 L659 509 L664 508 L666 507 L669 504 L670 500 L670 496 L671 492 L673 490 L674 487 L676 483 L678 480 L680 476 L682 473 L683 470 L684 467 L687 463 L689 460 L691 456 L691 453 L694 449 L696 445 L696 441 L698 437 L699 433 L700 429 L700 425 L701 422 L700 418 L699 415 L697 412 L694 411 L690 412 L687 413 L684 414 L680 417 L676 419 L672 420 L670 422 L666 425 L663 427 L660 430 L657 432 L654 433 L652 437 L648 439 L645 441 M621 464 L617 463 L612 464 L608 466 L604 467 L601 470 L598 472 L593 474 L591 476 L586 478 L583 481 L580 483 L577 486 L574 489 L571 492 L568 495 L565 498 L563 500 L559 503 L557 506 L554 509 L551 512 L550 515 L547 518 L544 521 L542 524 L539 528 L537 530 L535 533 L532 536 L529 539 L527 543 L524 546 L522 549 L519 551 L516 554 L514 558 L512 562 L510 565 L509 567 L508 571 L505 574 L504 578 L502 581 L500 584 L498 588 L496 591 L494 595 L492 599 L491 603 L490 607 L491 611 L491 615 L493 618 L496 622 L498 624 L502 626 L506 626 L510 626 L515 625 L518 624 L522 623 L526 620 L529 619 L533 618 L537 616 L541 614 L544 611 L547 610 L552 607 L555 605 L558 603 L562 601 L565 597 L568 595 L572 593 L574 591 L577 589 L580 587 L583 584 L586 582 L589 579 L592 577 L595 575 L597 573 L600 570 L604 568 L607 566 L609 564 L612 561 L615 560 L618 557 L622 555 L625 551 L629 550 L632 547 L636 545 L639 542 L643 539 L647 537 L650 534 L653 532 L657 530 L659 528 L663 526 L665 525 L668 523 L672 522 L676 520 L680 519 L681 517 L682 513 L683 509 L684 505 L686 503 L687 499 L689 496 L691 493 L693 490 L694 486 L696 482 L697 479 L699 475 L701 472 L703 468 L704 465 L707 461 L709 457 L709 453 L711 449 L712 445 L713 441 L713 438 L713 433 L713 430 L711 427 L709 425 L706 423 L703 424 L700 425 L696 426 L692 429 L689 430 L686 433 L682 435 L679 437 L676 439 L673 441 L670 443 L666 446 L663 449 L661 451 L658 453 M634 476 L629 476 L625 477 L620 478 L617 480 L613 483 L609 484 L606 486 L603 489 L598 491 L595 493 L592 496 L589 498 L586 501 L583 505 L580 507 L577 510 L574 513 L571 516 L569 519 L566 521 L564 525 L562 528 L559 531 L556 533 L554 537 L551 540 L549 543 L546 547 L543 549 L542 553 L538 555 L536 559 L534 562 L531 565 L528 567 L525 571 L523 574 L522 577 L520 581 L520 584 L517 587 L515 591 L514 594 L512 598 L510 600 L507 604 L506 608 L504 612 L502 616 L502 620 L502 624 L503 628 L505 632 L507 635 L511 638 L513 639 L518 640 L522 640 L526 638 L529 637 L534 635 L538 634 L541 632 L545 631 L549 628 L552 627 L555 625 L560 623 L563 620 L566 618 L570 615 L574 613 L577 610 L580 608 L584 606 L586 604 L590 601 L592 599 L595 596 L598 595 L601 592 L604 590 L607 588 L609 585 L612 583 L615 582 L619 579 L622 576 L625 575 L627 572 L631 570 L635 567 L637 564 L641 561 L645 559 L648 557 L651 555 L656 552 L659 549 L663 548 L666 545 L669 542 L672 542 L675 539 L678 538 L681 536 L684 534 L688 533 L692 532 L694 529 L694 526 L696 522 L696 518 L699 515 L700 511 L702 508 L703 506 L705 502 L707 498 L708 494 L711 492 L713 488 L713 484 L716 481 L718 477 L719 474 L721 470 L722 466 L724 462 L725 458 L726 454 L726 449 L726 446 L726 443 L724 439 L721 438 L719 436 L715 436 L712 437 L709 439 L706 440 L702 443 L698 444 L694 446 L691 449 L688 452 L685 454 L683 456 L679 459 L676 461 L673 463 L670 466 M646 488 L641 488 L637 489 L633 490 L629 493 L625 495 L622 496 L618 498 L615 501 L610 503 L607 505 L604 508 L601 510 L598 514 L594 517 L592 519 L589 522 L586 526 L584 529 L581 531 L578 535 L575 537 L573 540 L571 544 L568 546 L566 549 L564 552 L561 555 L558 559 L556 562 L553 564 L550 567 L548 572 L545 575 L543 578 L540 580 L538 583 L536 586 L533 590 L532 593 L531 597 L529 600 L528 603 L525 607 L523 610 L521 614 L519 617 L517 621 L515 625 L514 629 L513 633 L514 637 L515 641 L517 645 L518 648 L521 651 L526 652 L530 652 L534 652 L538 651 L542 650 L546 648 L550 646 L553 645 L557 644 L560 641 L564 639 L568 638 L571 636 L575 633 L578 631 L582 628 L585 625 L589 623 L592 621 L595 618 L598 616 L601 615 L604 611 L607 609 L610 607 L614 605 L616 603 L619 601 L622 598 L624 596 L628 594 L630 592 L634 589 L637 587 L640 585 L643 583 L646 580 L649 578 L651 576 L654 574 L657 571 L661 569 L664 567 L668 565 L671 562 L675 559 L679 558 L682 556 L685 553 L687 552 L690 550 L693 549 L696 546 L701 546 L704 545 L706 541 L708 538 L708 534 L709 530 L710 528 L712 524 L715 521 L716 517 L718 514 L719 510 L722 507 L723 503 L725 500 L726 497 L728 494 L730 489 L731 485 L733 482 L735 477 L737 474 L738 469 L738 465 L738 463 L738 459 L738 455 L737 451 L734 450 L731 448 L728 448 L725 449 L722 451 L718 453 L714 455 L711 456 L707 459 L704 461 L701 463 L697 466 L695 468 L691 471 L689 473 L685 475 L682 478 M658 501 L653 501 L649 501 L645 503 L642 504 L638 507 L634 509 L631 511 L627 513 L622 515 L620 517 L616 520 L613 523 L610 526 L607 528 L605 531 L600 535 L598 537 L595 540 L592 543 L590 546 L588 549 L585 553 L583 556 L580 559 L578 562 L575 564 L573 568 L570 571 L568 574 L565 578 L563 580 L560 583 L557 586 L554 590 L552 593 L549 596 L548 599 L545 603 L544 606 L543 609 L542 613 L540 616 L537 620 L535 622 L533 626 L531 630 L529 633 L528 637 L526 641 L526 646 L526 650 L527 654 L528 657 L531 661 L534 663 L538 665 L541 665 L545 665 L550 664 L553 662 L557 661 L561 659 L565 657 L569 655 L573 654 L577 652 L580 650 L583 648 L587 646 L591 643 L595 641 L598 639 L602 636 L604 633 L608 631 L611 629 L614 626 L616 624 L620 622 L622 620 L625 618 L628 616 L631 613 L634 611 L637 609 L640 606 L644 604 L646 601 L649 599 L652 597 L655 595 L658 593 L661 591 L664 589 L667 587 L670 584 L673 581 L676 579 L680 577 L683 575 L687 572 L690 570 L694 568 L697 566 L700 564 L702 563 L706 561 L709 559 L713 559 L717 557 L718 554 L720 551 L721 546 L721 543 L723 539 L724 536 L727 533 L729 529 L730 527 L732 523 L734 520 L735 515 L737 512 L739 509 L741 506 L742 501 L745 498 L746 495 L747 490 L749 486 L750 482 L751 478 L751 474 L751 470 L751 466 L750 464 L747 461 L745 461 L740 461 L738 462 L734 463 L731 465 L727 466 L723 469 L720 472 L716 474 L713 476 L710 478 L706 480 L704 483 L701 485 L698 488 L695 490 M670 513 L665 513 L661 513 L657 514 L653 517 L650 519 L646 522 L642 524 L639 525 L636 528 L631 530 L628 533 L626 536 L623 539 L620 541 L616 544 L613 547 L611 550 L607 553 L605 556 L603 559 L599 562 L598 565 L595 568 L592 572 L590 575 L587 577 L585 580 L583 583 L580 586 L578 589 L574 593 L571 595 L569 599 L567 602 L564 606 L562 609 L559 611 L558 615 L556 618 L555 621 L553 625 L551 629 L549 631 L547 635 L545 638 L544 642 L541 645 L539 649 L538 654 L538 658 L538 662 L539 666 L541 670 L543 673 L545 675 L550 677 L554 677 L558 677 L562 676 L566 675 L570 673 L573 672 L578 671 L581 668 L584 667 L588 665 L592 663 L595 661 L599 659 L603 656 L606 654 L610 651 L613 649 L617 646 L619 644 L623 642 L626 639 L628 637 L631 635 L635 633 L637 630 L641 627 L643 625 L646 624 L649 621 L652 619 L655 616 L658 614 L661 612 L664 609 L667 607 L671 605 L673 604 L676 601 L679 599 L682 596 L686 594 L688 592 L693 589 L696 587 L700 584 L702 582 L706 580 L709 579 L712 576 L715 574 L718 573 L721 571 L726 570 L728 569 L731 567 L732 563 L732 559 L734 555 L735 551 L737 549 L739 545 L741 543 L743 538 L745 535 L747 532 L748 528 L750 524 L752 521 L753 518 L755 514 L756 511 L758 506 L760 503 L761 498 L763 494 L763 490 L763 486 L764 482 L764 479 L762 476 L759 474 L756 472 L754 472 L751 473 L746 475 L743 476 L739 479 L735 481 L732 483 L729 486 L726 488 L722 490 L719 493 L717 495 L714 497 L710 500 L707 502 M683 525 L678 525 L674 526 L669 528 L666 529 L662 531 L659 533 L655 536 L651 537 L647 539 L644 541 L641 545 L637 548 L634 550 L631 554 L628 556 L625 559 L622 562 L620 565 L617 568 L614 571 L612 574 L610 577 L606 580 L604 584 L601 587 L599 589 L597 593 L595 595 L592 598 L589 602 L587 605 L584 608 L582 612 L579 615 L577 618 L574 621 L571 624 L569 627 L568 631 L567 634 L566 637 L563 641 L562 644 L559 647 L557 650 L555 654 L553 658 L551 662 L550 666 L550 670 L550 675 L551 678 L553 682 L554 686 L558 687 L562 689 L566 690 L569 689 L573 689 L577 687 L582 686 L586 684 L589 682 L594 680 L597 679 L600 677 L605 675 L608 673 L611 670 L615 669 L618 665 L622 663 L625 660 L629 659 L632 656 L635 653 L638 652 L641 650 L644 647 L647 645 L649 642 L652 641 L656 638 L659 635 L661 633 L664 631 L668 628 L670 627 L673 625 L677 622 L680 620 L682 618 L685 615 L688 613 L691 611 L694 609 L697 606 L701 605 L704 601 L708 599 L711 597 L715 594 L719 593 L722 591 L725 588 L728 587 L730 585 L734 584 L738 583 L742 581 L744 579 L744 575 L745 571 L747 567 L747 564 L750 561 L752 558 L754 555 L756 551 L757 547 L759 544 L760 540 L762 536 L764 533 L766 530 L767 526 L768 522 L771 519 L773 514 L774 510 L775 506 L776 503 L776 498 L776 495 L775 491 L774 487 L772 486 L769 484 L766 484 L762 485 L759 487 L755 489 L751 492 L748 493 L744 495 L741 498 L737 500 L734 502 L732 504 L729 507 L725 510 L723 512 L719 514 M695 537 L690 536 L685 537 L682 539 L678 540 L674 543 L671 545 L666 547 L663 549 L660 551 L656 554 L653 557 L649 559 L647 562 L644 565 L641 568 L638 570 L635 574 L632 577 L629 579 L627 583 L624 586 L621 589 L619 593 L617 595 L615 599 L612 602 L609 604 L607 607 L604 610 L602 614 L599 617 L596 620 L594 623 L591 627 L588 630 L586 633 L583 636 L582 639 L580 643 L579 646 L578 649 L576 653 L573 656 L572 659 L570 663 L567 666 L565 670 L564 674 L562 678 L562 682 L562 686 L563 690 L564 694 L567 698 L571 699 L574 702 L577 701 L581 701 L586 700 L590 699 L594 698 L598 696 L602 695 L606 693 L609 691 L613 689 L616 688 L620 685 L623 683 L627 680 L631 677 L634 675 L638 673 L641 671 L644 668 L646 666 L650 664 L653 661 L655 659 L659 656 L662 654 L665 652 L667 650 L671 648 L674 646 L676 643 L680 640 L683 639 L685 636 L689 634 L691 631 L694 629 L698 627 L701 625 L703 623 L706 621 L709 618 L713 616 L717 614 L720 611 L724 609 L728 607 L731 604 L734 603 L737 601 L740 599 L742 597 L746 595 L750 594 L753 593 L755 590 L757 587 L757 583 L758 579 L760 576 L761 572 L764 569 L766 566 L767 563 L769 559 L770 556 L772 552 L774 549 L776 546 L778 542 L779 538 L782 535 L783 531 L785 527 L786 522 L787 518 L787 515 L789 510 L788 506 L788 503 L787 500 L784 498 L781 497 L778 496 L775 497 L771 499 L767 501 L763 503 L760 505 L757 507 L753 509 L750 512 L747 515 L744 517 L740 519 L738 521 L734 524 L732 526 M707 549 L703 548 L698 549 L694 551 L690 553 L687 556 L683 557 L679 559 L675 562 L672 564 L668 566 L665 568 L662 572 L659 575 L656 578 L653 580 L650 583 L646 586 L644 589 L642 592 L639 595 L636 598 L633 601 L631 604 L629 607 L626 610 L623 614 L621 617 L619 619 L616 623 L614 626 L611 629 L609 631 L606 635 L603 639 L601 641 L599 644 L596 648 L594 651 L592 655 L591 658 L589 662 L587 665 L586 667 L584 671 L581 675 L580 678 L578 682 L575 686 L575 690 L574 694 L575 698 L576 702 L576 706 L579 708 L582 711 L586 713 L591 713 L595 713 L598 711 L602 711 L606 710 L610 708 L614 706 L618 705 L621 702 L625 700 L629 699 L632 697 L636 694 L639 692 L642 690 L646 687 L650 684 L653 682 L656 680 L659 678 L662 676 L665 673 L667 671 L671 668 L674 666 L677 663 L680 662 L683 659 L686 657 L689 655 L692 653 L695 651 L698 648 L701 646 L704 643 L707 642 L710 640 L713 636 L716 635 L719 633 L722 630 L725 627 L729 625 L733 623 L736 621 L739 618 L743 617 L746 615 L749 612 L752 611 L754 609 L759 608 L762 607 L766 606 L767 603 L769 599 L769 595 L770 591 L772 588 L774 584 L775 581 L778 578 L779 574 L781 572 L783 568 L785 565 L786 561 L788 557 L790 554 L791 550 L794 547 L795 543 L797 538 L798 534 L800 530 L800 526 L800 522 L800 519 L800 515 L799 511 L796 510 L793 509 L790 509 L787 510 L783 511 L780 513 L776 515 L772 517 L769 519 L765 522 L763 523 L759 526 L756 528 L753 531 L750 534 L747 535 L744 538 M719 561 L714 561 L710 562 L706 563 L703 564 L699 567 L695 569 L691 571 L687 574 L684 576 L680 578 L678 580 L674 583 L671 587 L668 589 L666 592 L662 595 L659 598 L656 601 L654 604 L651 606 L648 610 L646 613 L644 615 L641 619 L639 622 L637 625 L633 628 L632 632 L629 634 L626 638 L624 641 L621 643 L619 647 L616 650 L614 653 L611 656 L608 659 L607 663 L606 666 L604 670 L602 673 L601 676 L599 679 L596 682 L594 686 L592 689 L590 693 L588 698 L588 702 L587 706 L587 709 L587 713 L589 717 L592 720 L595 722 L599 724 L602 724 L606 724 L610 724 L614 722 L619 721 L622 719 L627 717 L630 716 L633 714 L637 712 L641 711 L645 708 L648 706 L652 703 L655 701 L659 698 L662 696 L666 694 L668 692 L671 689 L675 688 L677 685 L681 682 L683 680 L687 679 L689 676 L692 673 L695 671 L698 669 L702 667 L704 664 L708 662 L710 659 L714 657 L716 655 L720 654 L722 651 L726 649 L727 646 L731 644 L734 642 L737 640 L741 637 L745 635 L748 633 L751 631 L755 628 L758 626 L761 625 L765 622 L767 621 L770 620 L774 618 L777 617 L780 615 L780 610 L782 607 L783 603 L784 600 L786 597 L788 593 L790 590 L792 587 L793 583 L796 579 L797 576 L799 572 L800 569 L802 566 L804 563 L805 558 L807 554 L809 550 L811 546 L812 543 L812 538 L812 534 L813 531 L812 526 L811 524 L808 521 L806 520 L802 521 L799 522 L795 523 L791 525 L788 527 L784 529 L780 531 L777 534 L774 536 L771 539 L768 541 L765 544 L762 545 L759 547 L756 550 M731 573 L727 573 L723 573 L719 574 L715 577 L711 578 L708 581 L704 583 L700 585 L696 587 L692 590 L690 593 L686 595 L684 598 L681 601 L678 604 L674 607 L671 610 L669 612 L666 615 L663 619 L662 622 L659 624 L656 628 L654 630 L651 634 L649 637 L646 639 L643 643 L641 646 L639 650 L636 652 L634 655 L631 659 L629 662 L625 665 L623 668 L621 672 L619 674 L618 678 L617 681 L614 685 L612 687 L611 691 L609 694 L607 698 L605 701 L602 705 L601 709 L599 713 L599 717 L599 721 L601 725 L601 728 L604 731 L608 734 L612 735 L614 735 L619 735 L623 734 L628 734 L631 732 L636 731 L639 729 L642 727 L646 726 L650 723 L654 722 L657 720 L661 718 L664 716 L668 712 L672 710 L674 708 L678 705 L681 703 L683 701 L687 698 L689 697 L693 695 L696 691 L698 690 L701 687 L705 685 L708 682 L711 680 L713 678 L716 676 L720 674 L722 671 L725 669 L729 667 L731 664 L734 662 L737 660 L741 658 L743 656 L746 654 L750 652 L753 649 L756 646 L760 644 L764 642 L766 640 L770 638 L773 636 L776 635 L779 632 L782 632 L787 630 L790 629 L791 626 L793 623 L794 619 L795 615 L796 611 L799 609 L800 605 L801 601 L804 598 L805 595 L807 592 L808 588 L811 584 L812 581 L814 578 L816 574 L817 570 L819 566 L821 562 L823 558 L823 554 L824 550 L824 546 L825 543 L824 539 L823 535 L820 534 L818 533 L815 532 L810 533 L807 535 L804 537 L800 539 L796 541 L793 544 L789 545 L787 548 L783 550 L780 553 L777 555 L774 557 L771 559 L768 562 M744 584 L739 584 L735 585 L731 587 L727 589 L724 590 L719 592 L716 595 L712 597 L709 599 L705 602 L702 605 L699 606 L696 610 L692 612 L690 616 L687 618 L684 621 L681 625 L679 627 L676 630 L673 633 L671 636 L669 639 L666 642 L664 645 L661 649 L659 651 L657 654 L653 657 L651 661 L648 663 L646 666 L643 670 L640 673 L638 676 L636 680 L633 682 L632 686 L630 689 L629 693 L627 696 L625 699 L624 702 L621 706 L619 709 L618 712 L615 717 L613 720 L613 724 L611 728 L613 732 L613 736 L614 739 L617 742 L620 745 L624 746 L627 746 L631 747 L636 745 L639 745 L643 743 L647 742 L652 740 L656 738 L658 737 L662 735 L666 733 L669 731 L673 729 L677 726 L681 724 L684 721 L687 719 L690 716 L693 714 L696 712 L699 709 L702 707 L705 705 L708 703 L710 701 L714 699 L716 696 L719 694 L722 692 L726 690 L728 688 L731 684 L734 683 L738 681 L740 679 L743 676 L747 674 L749 671 L752 670 L755 667 L758 665 L762 663 L765 661 L769 658 L772 656 L775 653 L779 651 L782 649 L785 648 L788 646 L791 644 L794 643 L798 641 L801 640 L803 638 L805 634 L806 630 L806 626 L808 623 L810 620 L812 617 L814 614 L815 611 L817 606 L818 604 L821 600 L823 596 L824 593 L825 589 L827 585 L829 582 L831 578 L832 574 L834 569 L835 566 L836 562 L836 558 L836 554 L836 551 L834 548 L832 546 L829 544 L826 544 L822 545 L819 547 L815 549 L812 551 L808 553 L804 556 L801 558 L799 560 L795 562 L792 564 L789 567 L786 569 L783 572 L780 574 M756 596 L751 596 L747 597 L742 598 L740 601 L735 602 L732 604 L728 606 L724 608 L721 611 L718 613 L714 616 L712 619 L708 622 L705 624 L702 628 L700 630 L697 633 L694 636 L691 639 L689 641 L686 644 L683 648 L681 651 L678 653 L676 657 L673 659 L672 663 L668 666 L666 669 L664 673 L661 675 L659 679 L656 681 L654 684 L650 688 L649 691 L646 694 L645 697 L643 701 L642 703 L641 708 L638 711 L636 714 L635 717 L632 720 L630 724 L628 727 L626 732 L625 736 L625 740 L625 743 L626 747 L627 750 L630 753 L633 755 L637 757 L640 757 L644 757 L648 757 L653 756 L656 754 L660 752 L664 751 L667 750 L671 748 L675 745 L679 744 L682 742 L685 740 L689 737 L693 735 L697 733 L699 730 L702 727 L706 725 L708 723 L711 721 L714 719 L717 717 L721 714 L724 712 L726 710 L729 708 L732 705 L735 703 L737 701 L740 699 L744 696 L747 695 L749 692 L753 689 L756 686 L760 684 L763 682 L767 679 L770 677 L774 674 L777 671 L781 670 L785 667 L787 664 L791 663 L794 661 L797 659 L800 657 L803 655 L806 654 L810 653 L813 652 L815 649 L816 645 L818 642 L818 638 L819 635 L822 631 L824 629 L825 625 L828 622 L829 619 L831 615 L832 612 L834 608 L835 605 L837 601 L839 598 L841 594 L843 590 L844 586 L846 582 L847 578 L847 574 L848 571 L848 566 L847 563 L846 560 L844 557 L841 557 L838 556 L834 557 L831 559 L828 561 L824 563 L819 565 L816 567 L813 570 L810 572 L807 574 L804 576 L801 579 L798 581 L795 584 L792 586 M768 608 L763 608 L759 608 L755 610 L752 612 L748 615 L744 616 L740 618 L736 620 L734 622 L730 625 L727 627 L723 631 L721 633 L718 636 L715 639 L712 642 L709 644 L706 648 L704 650 L701 653 L699 657 L696 660 L694 662 L691 665 L689 668 L687 671 L684 674 L682 677 L679 680 L677 683 L674 686 L671 689 L669 693 L666 696 L663 698 L662 701 L659 705 L657 708 L656 712 L655 715 L654 719 L651 722 L649 724 L647 727 L645 731 L643 734 L641 739 L639 742 L638 746 L637 750 L638 754 L639 758 L640 761 L642 764 L646 766 L649 767 L654 769 L657 767 L661 767 L664 766 L669 764 L673 763 L677 762 L680 760 L684 759 L688 757 L691 755 L695 753 L698 750 L701 748 L705 746 L709 744 L712 741 L716 738 L719 735 L722 732 L726 730 L730 728 L733 725 L735 723 L738 721 L742 718 L744 716 L748 714 L750 712 L753 709 L756 707 L759 705 L761 703 L765 701 L768 698 L772 696 L775 693 L779 690 L782 688 L786 686 L790 683 L792 681 L796 678 L800 676 L803 675 L806 673 L809 670 L812 669 L815 666 L818 665 L821 664 L826 663 L827 660 L828 656 L829 653 L830 649 L832 646 L833 643 L835 640 L837 637 L839 633 L840 630 L842 626 L844 623 L845 619 L848 616 L849 613 L850 609 L852 605 L855 602 L856 598 L857 593 L859 590 L859 586 L860 582 L859 578 L859 575 L857 571 L855 569 L852 568 L850 568 L845 570 L842 571 L839 572 L835 575 L831 577 L828 580 L825 581 L822 584 L819 586 L816 589 L813 591 L810 593 L807 596 L804 598 M780 620 L775 620 L771 620 L767 622 L764 624 L759 625 L757 628 L753 630 L749 632 L745 634 L742 636 L740 639 L736 642 L734 644 L730 647 L728 650 L725 653 L722 656 L719 659 L716 662 L713 664 L711 668 L709 671 L706 674 L704 677 L702 680 L699 683 L696 686 L694 689 L692 691 L689 695 L686 698 L685 700 L681 703 L679 706 L676 710 L673 713 L671 716 L670 719 L669 722 L667 726 L666 730 L664 732 L662 736 L660 738 L658 741 L656 745 L654 749 L652 753 L652 757 L651 761 L651 764 L651 768 L654 771 L655 774 L658 777 L663 778 L666 779 L670 778 L674 777 L678 776 L681 774 L685 774 L690 772 L694 771 L697 769 L700 768 L703 765 L707 764 L710 761 L715 759 L718 757 L722 754 L724 751 L728 749 L731 746 L735 744 L739 741 L742 738 L746 735 L750 733 L752 730 L755 728 L759 725 L763 723 L766 720 L770 717 L773 714 L777 712 L780 709 L784 707 L787 704 L791 702 L794 699 L798 697 L801 694 L805 692 L808 689 L812 687 L814 686 L818 684 L820 682 L823 680 L826 678 L829 677 L833 676 L837 674 L838 672 L839 669 L840 665 L841 660 L844 657 L845 653 L849 649 L851 645 L852 641 L853 639 L855 635 L857 631 L858 628 L860 624 L862 621 L864 618 L865 614 L867 609 L869 605 L870 602 L870 598 L871 594 L870 591 L870 587 L869 583 L867 582 L864 581 L860 581 L858 582 L854 583 L850 585 L846 586 L843 589 L839 591 L836 594 L833 596 L829 599 L826 601 L822 605 L819 606 L816 609 M792 631 L788 631 L783 633 L779 634 L776 635 L772 637 L769 639 L765 642 L762 643 L757 646 L754 648 L752 651 L749 654 L746 656 L743 659 L739 661 L737 665 L734 667 L731 670 L728 673 L725 677 L724 679 L720 683 L718 686 L715 689 L712 692 L710 696 L707 699 L705 702 L703 705 L700 708 L697 711 L695 715 L692 718 L690 720 L686 724 L685 727 L683 730 L682 733 L680 737 L679 740 L677 743 L675 746 L673 749 L671 752 L669 755 L668 759 L666 764 L664 768 L664 771 L664 775 L666 779 L667 781 L669 784 L672 786 L676 787 L679 788 L682 787 L687 788 L690 786 L694 785 L698 784 L702 782 L707 781 L710 779 L713 778 L716 776 L720 774 L723 772 L727 769 L730 767 L733 765 L737 762 L741 760 L744 757 L748 754 L751 752 L755 749 L757 746 L762 743 L765 741 L768 739 L772 736 L776 733 L778 730 L782 728 L785 725 L788 722 L793 720 L795 717 L799 716 L803 713 L806 709 L809 708 L813 706 L816 702 L820 700 L823 699 L826 697 L830 694 L833 693 L836 691 L838 689 L842 687 L845 687 L848 686 L851 683 L851 680 L852 676 L853 672 L855 669 L858 665 L860 660 L862 657 L864 653 L864 650 L866 646 L869 643 L870 639 L871 636 L873 633 L875 629 L877 625 L878 621 L879 617 L881 613 L882 610 L882 606 L882 602 L882 599 L880 596 L878 594 L875 593 L872 593 L869 593 L865 595 L861 597 L857 599 L854 600 L850 603 L847 605 L844 608 L840 611 L837 614 L834 616 L830 619 L827 621 M804 643 L800 644 L795 643 L792 646 L788 647 L784 649 L781 651 L778 653 L774 655 L770 657 L767 660 L764 662 L762 665 L758 667 L755 670 L753 673 L750 676 L747 679 L744 681 L741 684 L738 688 L736 690 L733 694 L730 697 L728 700 L725 703 L723 707 L720 711 L718 713 L716 716 L713 719 L710 723 L707 726 L705 729 L702 731 L700 735 L698 738 L696 742 L694 746 L693 750 L690 754 L689 756 L687 760 L684 762 L683 766 L680 769 L679 773 L678 778 L678 782 L678 785 L678 788 L680 791 L682 794 L685 796 L688 797 L692 798 L696 797 L699 797 L703 797 L708 795 L711 794 L715 792 L719 790 L722 790 L726 788 L729 785 L733 784 L736 782 L739 780 L742 777 L747 774 L750 773 L753 769 L756 767 L760 764 L764 762 L766 760 L770 757 L774 755 L777 752 L780 749 L784 747 L787 743 L791 741 L794 738 L798 736 L801 733 L805 731 L808 728 L811 726 L815 723 L817 721 L821 719 L824 716 L829 714 L831 712 L836 710 L839 707 L843 705 L846 703 L850 700 L852 699 L856 698 L860 696 L862 694 L862 691 L863 687 L865 683 L867 680 L868 676 L870 672 L873 669 L874 664 L876 662 L877 658 L879 654 L881 651 L883 647 L885 645 L886 641 L888 637 L889 633 L890 630 L892 625 L892 622 L893 619 L892 615 L893 611 L891 607 L889 606 L886 605 L883 604 L880 605 L876 607 L873 608 L869 610 L866 613 L862 616 L859 617 L855 620 L852 623 L849 625 L845 628 L843 631 L839 633 M816 655 L811 654 L807 656 L804 657 L800 658 L796 661 L793 663 L790 664 L786 667 L782 668 L780 671 L776 673 L774 676 L771 679 L768 681 L765 685 L762 687 L759 690 L756 693 L754 696 L751 699 L749 702 L745 705 L744 708 L741 711 L738 715 L736 718 L734 721 L731 724 L728 727 L726 729 L723 732 L720 736 L718 739 L715 742 L713 746 L711 748 L709 752 L707 757 L705 760 L704 763 L701 767 L699 770 L697 773 L696 776 L693 780 L693 784 L691 788 L691 793 L692 798 L694 801 L696 804 L699 806 L702 808 L706 808 L709 807 L713 807 L716 805 L721 804 L725 803 L729 803 L732 801 L736 799 L738 797 L742 795 L746 794 L749 792 L752 789 L756 787 L759 785 L762 782 L766 780 L770 778 L772 774 L776 772 L779 770 L782 767 L786 764 L790 762 L792 759 L796 756 L799 754 L802 752 L806 749 L809 746 L813 744 L816 741 L820 738 L823 737 L826 733 L830 732 L833 729 L836 727 L840 724 L843 722 L847 721 L851 717 L854 716 L858 714 L861 711 L864 711 L867 710 L870 708 L873 706 L874 702 L874 698 L876 694 L877 691 L880 686 L882 683 L884 680 L886 676 L887 673 L889 669 L890 666 L892 663 L893 659 L896 656 L897 653 L899 649 L900 645 L902 641 L903 637 L904 634 L903 630 L903 626 L903 622 L902 620 L900 618 L897 617 L894 616 L891 617 L887 619 L884 621 L880 623 L877 625 L873 628 L870 629 L867 632 L864 634 L861 637 L857 640 L853 642 L850 645 M828 666 L823 666 L819 667 L815 668 L812 670 L808 672 L805 675 L802 676 L799 678 L795 680 L792 682 L788 685 L786 687 L783 690 L781 693 L778 696 L774 698 L772 701 L769 704 L767 706 L763 710 L762 712 L759 716 L757 719 L753 723 L751 726 L749 728 L747 731 L743 735 L742 738 L739 741 L736 743 L733 747 L732 749 L728 752 L726 755 L724 758 L723 763 L721 767 L719 770 L717 774 L716 777 L713 780 L712 783 L709 787 L707 790 L706 793 L705 798 L704 802 L706 807 L707 810 L710 813 L712 816 L715 817 L719 816 L722 817 L726 815 L729 815 L733 814 L738 812 L742 812 L745 811 L748 808 L751 807 L755 805 L758 803 L762 802 L765 799 L768 796 L772 795 L775 792 L779 789 L782 788 L785 785 L788 782 L791 779 L795 777 L799 774 L801 772 L805 769 L808 768 L811 765 L815 762 L818 759 L821 757 L825 754 L828 752 L832 750 L835 747 L838 744 L841 743 L845 739 L848 738 L851 735 L855 733 L859 730 L862 728 L866 726 L869 724 L873 722 L875 721 L879 721 L882 719 L883 716 L885 713 L886 709 L887 705 L889 701 L891 698 L893 694 L895 691 L897 687 L899 684 L900 680 L902 676 L904 672 L906 668 L908 665 L909 661 L911 656 L912 653 L914 649 L914 645 L915 642 L914 639 L913 634 L913 632 L910 630 L907 629 L903 629 L899 631 L895 634 L892 635 L888 637 L884 639 L881 641 L877 644 L875 646 L872 649 L868 651 L865 654 L862 657 M840 678 L836 678 L831 679 L828 680 L824 682 L821 684 L818 686 L814 687 L811 690 L807 692 L804 693 L802 696 L798 699 L796 701 L792 705 L790 706 L787 709 L785 712 L782 715 L779 718 L777 721 L774 724 L771 727 L769 729 L767 733 L764 736 L762 740 L759 743 L756 746 L755 748 L752 751 L750 754 L747 756 L744 760 L742 762 L740 766 L738 769 L736 772 L734 777 L732 781 L730 785 L728 789 L725 793 L723 796 L721 800 L720 803 L718 807 L718 812 L719 816 L721 819 L723 822 L725 825 L729 825 L733 825 L735 826 L739 825 L743 825 L746 824 L751 822 L755 821 L758 820 L761 818 L765 817 L768 814 L771 813 L774 811 L777 808 L781 807 L784 804 L788 802 L791 800 L795 796 L798 795 L801 792 L804 790 L807 787 L811 785 L814 782 L817 779 L820 777 L823 775 L827 772 L830 770 L833 767 L837 764 L839 763 L843 759 L847 758 L849 755 L853 753 L856 751 L859 748 L863 746 L866 744 L870 742 L873 739 L877 737 L881 734 L884 733 L887 731 L890 731 L893 729 L895 727 L896 723 L897 720 L898 716 L900 713 L901 710 L904 706 L906 702 L908 699 L909 695 L911 692 L913 687 L915 684 L916 680 L919 675 L920 672 L922 668 L924 665 L924 661 L925 657 L925 654 L925 650 L925 647 L923 644 L921 642 L917 641 L914 642 L910 643 L906 646 L903 648 L898 649 L896 651 L893 653 L890 656 L885 658 L883 661 L879 664 L876 666 L873 668 M851 690 L848 690 L843 690 L839 692 L836 694 L832 695 L829 698 L826 699 L823 701 L819 703 L816 704 L814 708 L811 709 L808 712 L806 715 L803 717 L800 720 L798 723 L794 726 L792 729 L789 732 L787 735 L785 738 L782 741 L780 743 L778 747 L775 749 L772 753 L770 756 L767 759 L765 763 L761 766 L759 769 L756 772 L753 775 L751 779 L750 783 L748 787 L746 790 L744 794 L741 798 L739 802 L737 806 L735 810 L733 813 L732 818 L732 821 L733 825 L735 828 L736 831 L739 834 L743 835 L747 835 L752 835 L757 833 L760 832 L764 832 L767 830 L771 829 L774 828 L777 826 L780 824 L783 822 L787 821 L790 819 L794 816 L797 814 L800 812 L804 809 L807 806 L810 804 L813 802 L816 800 L820 797 L823 795 L825 792 L829 790 L832 787 L836 784 L839 783 L841 780 L845 777 L848 775 L852 773 L855 770 L859 768 L861 765 L864 763 L868 761 L871 758 L874 757 L878 754 L881 752 L884 749 L889 748 L891 746 L894 743 L898 742 L901 741 L904 740 L906 738 L907 734 L908 731 L908 728 L911 723 L912 721 L915 717 L917 713 L918 710 L920 706 L922 703 L923 698 L925 695 L927 692 L929 688 L930 683 L932 680 L933 676 L934 673 L935 669 L936 666 L935 663 L935 659 L934 657 L931 654 L929 653 L924 654 L920 656 L917 657 L913 659 L909 661 L906 663 L904 665 L900 668 L897 671 L894 673 L891 675 L887 678 L884 680 M863 701 L859 701 L855 702 L852 703 L849 705 L845 706 L842 708 L839 710 L835 712 L832 715 L828 717 L826 719 L822 722 L820 724 L816 727 L813 731 L811 733 L808 736 L805 739 L803 743 L800 745 L797 748 L795 751 L793 754 L791 758 L788 760 L786 763 L783 766 L780 769 L778 773 L775 776 L772 780 L770 782 L767 786 L764 789 L763 793 L761 796 L759 800 L757 804 L755 808 L753 812 L750 815 L749 819 L747 822 L746 827 L746 831 L747 834 L749 838 L751 839 L753 842 L757 843 L760 844 L766 843 L770 842 L773 842 L777 841 L781 839 L785 837 L789 835 L792 833 L797 831 L800 830 L803 827 L806 825 L810 823 L813 821 L816 818 L819 816 L822 814 L825 811 L828 809 L832 806 L835 805 L838 802 L841 799 L844 797 L847 794 L850 792 L854 790 L858 787 L860 785 L863 783 L866 781 L869 778 L873 776 L876 774 L879 772 L882 769 L885 767 L889 764 L892 763 L896 760 L900 758 L903 755 L908 753 L912 752 L915 751 L916 749 L917 746 L918 742 L920 738 L921 735 L923 731 L926 728 L927 724 L928 722 L930 718 L932 715 L934 710 L935 707 L937 703 L940 700 L941 695 L942 692 L943 688 L945 685 L945 681 L945 678 L945 675 L945 671 L944 669 L942 666 L938 665 L934 666 L930 668 L927 670 L923 671 L921 674 L917 676 L914 678 L911 680 L908 682 L905 684 L902 687 L898 689 L896 692 M875 713 L870 713 L867 713 L863 715 L859 717 L855 719 L852 722 L849 723 L845 726 L842 728 L838 731 L835 733 L832 736 L829 739 L826 741 L823 745 L821 747 L818 751 L815 754 L812 757 L809 761 L806 764 L804 767 L801 770 L798 773 L796 776 L794 779 L791 783 L788 786 L786 789 L783 793 L781 795 L779 798 L776 802 L775 807 L773 811 L771 814 L768 817 L767 822 L764 825 L763 828 L761 832 L761 836 L760 840 L761 844 L762 846 L764 849 L767 850 L770 851 L775 852 L779 852 L783 850 L787 850 L791 849 L795 848 L798 846 L802 844 L806 843 L810 841 L813 838 L816 837 L819 834 L822 832 L825 829 L829 828 L831 825 L835 823 L838 820 L840 818 L844 817 L848 814 L850 811 L854 810 L856 806 L860 804 L863 802 L865 799 L869 797 L873 794 L875 793 L878 791 L882 788 L884 786 L887 784 L890 781 L894 779 L896 777 L900 775 L904 772 L906 771 L910 769 L914 766 L918 764 L922 763 L926 762 L927 758 L928 754 L930 750 L931 745 L934 742 L936 739 L937 735 L939 732 L941 729 L942 726 L944 722 L946 718 L948 715 L950 711 L951 707 L952 703 L954 700 L954 697 L955 693 L955 690 L956 686 L955 683 L954 680 L952 678 L949 678 L944 678 L941 680 L937 682 L935 683 L931 686 L928 687 L925 690 L921 692 L919 694 L915 697 L913 699 L909 701 L907 704 M886 724 L883 724 L879 725 L875 727 L871 728 L868 730 L864 732 L860 734 L857 736 L853 739 L850 742 L847 744 L844 747 L842 750 L839 753 L835 755 L833 758 L830 762 L827 765 L825 767 L822 770 L820 774 L817 777 L815 781 L812 784 L809 787 L806 789 L805 792 L802 796 L800 799 L797 802 L794 806 L792 809 L791 812 L789 816 L786 819 L785 824 L783 827 L780 831 L779 834 L777 836 L775 840 L774 844 L774 849 L775 852 L776 855 L778 857 L781 859 L784 860 L788 860 L792 859 L796 859 L801 858 L804 858 L807 856 L811 855 L816 853 L820 852 L822 849 L826 847 L830 845 L832 843 L835 840 L839 838 L841 837 L844 834 L848 832 L850 829 L853 828 L856 825 L859 823 L863 821 L865 818 L868 816 L871 813 L875 811 L878 809 L880 807 L884 805 L887 802 L889 800 L893 798 L896 795 L899 793 L902 791 L905 789 L908 787 L911 785 L915 783 L918 781 L922 779 L925 777 L929 775 L933 774 L936 771 L938 768 L939 765 L941 760 L941 756 L943 753 L946 750 L947 747 L950 743 L951 740 L953 737 L954 733 L956 729 L957 726 L959 723 L962 719 L962 716 L963 711 L965 707 L965 702 L965 698 L963 694 L960 691 L955 691 L952 692 L948 694 L944 696 L942 698 L939 699 L935 702 L932 704 L929 706 L926 708 L923 711 L921 714 L918 715 M898 736 L893 736 L891 737 L887 737 L883 740 L879 742 L876 743 L873 746 L870 748 L866 749 L863 752 L860 755 L857 757 L854 761 L851 764 L849 766 L846 769 L843 772 L840 775 L838 778 L835 781 L833 784 L831 788 L828 791 L826 793 L822 797 L820 800 L818 803 L816 805 L813 809 L811 811 L808 815 L805 817 L804 822 L803 826 L800 828 L798 832 L797 836 L795 840 L792 842 L791 846 L790 850 L788 853 L789 857 L789 860 L793 865 L796 867 L798 868 L802 868 L806 868 L810 867 L814 867 L817 866 L821 864 L825 863 L828 862 L832 859 L836 858 L840 855 L843 852 L847 851 L850 847 L854 845 L857 844 L860 841 L862 838 L865 837 L869 835 L871 832 L874 831 L877 827 L880 825 L883 823 L886 821 L889 819 L892 817 L896 814 L898 813 L901 810 L905 807 L907 805 L910 803 L913 801 L918 799 L921 796 L925 793 L928 792 L932 790 L935 787 L940 785 L943 784 L946 781 L949 779 L950 775 L951 771 L952 767 L954 764 L956 761 L958 757 L959 755 L961 752 L963 747 L964 744 L966 741 L968 738 L969 734 L971 731 L972 727 L973 723 L974 718 L975 714 L975 710 L973 705 L969 703 L965 703 L960 705 L956 707 L953 709 L949 712 L946 714 L942 717 L938 719 L935 722 L931 725 L928 727 M909 747 L905 747 L901 748 L898 750 L895 751 L892 753 L888 755 L884 757 L881 759 L878 761 L876 764 L872 767 L870 769 L866 772 L864 775 L861 777 L858 780 L857 783 L853 786 L851 789 L849 792 L846 795 L843 798 L841 801 L838 803 L836 806 L834 809 L832 813 L829 815 L827 819 L825 821 L822 824 L820 827 L818 831 L817 835 L815 838 L813 841 L810 845 L808 849 L807 851 L805 854 L804 857 L803 861 L803 865 L805 869 L806 872 L810 874 L812 875 L817 876 L820 876 L824 874 L828 875 L831 874 L834 872 L838 872 L842 870 L846 867 L849 866 L853 864 L856 862 L860 859 L863 856 L867 853 L871 851 L875 848 L878 845 L881 844 L884 841 L886 839 L890 837 L893 835 L895 832 L898 830 L901 828 L904 826 L907 823 L911 820 L914 819 L918 815 L921 813 L925 811 L928 809 L933 806 L936 803 L939 801 L942 799 L946 797 L950 795 L954 794 L957 792 L958 789 L960 786 L961 782 L962 778 L964 775 L966 772 L968 768 L969 765 L971 763 L972 759 L974 755 L976 752 L977 749 L979 745 L981 742 L981 738 L982 735 L984 731 L984 727 L984 721 L982 717 L979 715 L974 716 L970 718 L967 720 L963 722 L959 724 L955 727 L952 729 L948 731 L945 733 L942 736 L939 739 M921 759 L918 760 L913 760 L910 761 L906 763 L903 764 L901 767 L897 768 L894 771 L891 772 L888 774 L885 777 L883 780 L879 783 L877 784 L874 787 L871 791 L868 793 L867 797 L864 800 L861 803 L858 807 L855 810 L852 814 L850 817 L848 820 L844 823 L842 826 L839 830 L837 833 L834 836 L833 839 L830 844 L829 847 L828 850 L825 853 L823 857 L822 860 L819 864 L818 867 L818 870 L818 873 L819 876 L822 880 L826 882 L830 883 L834 883 L838 883 L842 882 L845 881 L849 880 L852 879 L855 877 L859 875 L863 873 L866 872 L869 870 L873 867 L876 864 L880 862 L884 860 L887 857 L891 854 L894 852 L897 849 L901 847 L904 844 L907 841 L912 839 L915 835 L919 834 L922 831 L926 828 L929 825 L932 823 L936 820 L939 818 L942 815 L946 814 L950 811 L953 809 L956 807 L960 805 L963 804 L967 802 L968 800 L970 796 L971 793 L972 789 L974 786 L976 783 L978 780 L979 776 L980 773 L982 771 L983 768 L985 764 L987 761 L989 757 L990 754 L991 751 L992 747 L993 743 L993 738 L994 733 L992 730 L988 729 L984 728 L980 730 L976 732 L972 734 L969 736 L965 739 L962 741 L960 743 L956 745 L953 748 L950 751 M932 770 L929 771 L925 771 L922 773 L917 775 L913 777 L910 779 L906 781 L903 783 L900 786 L897 789 L894 792 L890 794 L888 798 L884 801 L881 804 L879 807 L877 810 L874 813 L871 817 L868 819 L867 823 L864 826 L861 829 L858 833 L856 835 L853 839 L850 842 L848 845 L846 849 L845 852 L843 856 L841 859 L840 862 L837 866 L835 868 L834 871 L833 874 L832 877 L832 881 L834 885 L837 888 L841 889 L845 891 L848 890 L852 890 L855 890 L858 889 L862 888 L865 887 L868 886 L872 883 L876 882 L879 880 L882 877 L886 875 L889 873 L893 870 L895 868 L900 865 L903 863 L906 860 L910 858 L913 855 L916 852 L920 851 L923 848 L927 845 L930 842 L933 840 L937 838 L940 835 L943 832 L947 831 L950 828 L953 825 L957 823 L960 821 L963 820 L967 818 L971 815 L974 814 L976 813 L979 810 L979 806 L980 802 L983 798 L985 794 L986 791 L989 787 L990 784 L991 781 L993 776 L996 773 L997 769 L999 766 L1000 762 L1001 759 L1003 755 L1003 750 L1002 747 L1000 743 L998 740 L993 741 L990 742 L986 744 L982 746 L978 748 L975 751 L972 753 L969 756 L966 758 L963 760 L960 762 M944 782 L940 782 L937 783 L933 785 L930 786 L926 788 L923 791 L918 792 L916 794 L912 797 L910 800 L906 802 L903 806 L900 808 L897 811 L895 814 L892 818 L889 820 L888 824 L885 827 L882 829 L879 832 L877 836 L874 839 L872 842 L870 845 L867 849 L864 852 L862 854 L861 857 L860 862 L857 864 L856 867 L854 871 L851 874 L850 878 L848 882 L846 886 L847 889 L848 891 L851 895 L855 897 L859 897 L862 897 L867 897 L871 896 L875 896 L879 894 L882 893 L886 892 L889 889 L892 887 L895 886 L899 883 L902 881 L905 878 L908 876 L911 873 L915 871 L919 869 L922 866 L924 864 L928 862 L931 858 L934 856 L938 854 L941 851 L945 849 L947 847 L951 844 L955 842 L958 839 L960 838 L964 835 L967 833 L971 831 L974 829 L977 827 L981 825 L984 824 L986 823 L988 820 L989 817 L991 812 L992 809 L995 805 L997 800 L999 797 L1001 792 L1003 788 L1005 784 L1006 780 L1008 777 L1010 774 L1010 770 L1011 767 L1012 763 L1012 758 L1010 755 L1006 753 L1003 753 L999 755 L995 756 L991 758 L988 760 L986 762 L982 765 L979 767 L977 770 L973 772 L971 774 M955 793 L951 794 L948 794 L945 795 L941 798 L938 799 L935 802 L931 804 L927 805 L925 808 L922 811 L919 814 L916 816 L913 819 L910 822 L907 825 L905 828 L903 831 L900 834 L899 836 L896 839 L894 842 L891 846 L889 849 L886 851 L884 855 L881 857 L879 860 L876 864 L875 866 L873 870 L872 872 L870 876 L868 878 L866 883 L865 886 L862 890 L862 894 L864 899 L866 901 L869 904 L873 905 L877 904 L881 904 L885 903 L889 903 L893 901 L896 901 L899 898 L902 897 L905 895 L909 893 L911 891 L915 889 L918 887 L922 884 L925 881 L928 880 L931 877 L934 874 L937 872 L940 870 L943 867 L946 866 L949 862 L953 860 L956 858 L959 856 L962 853 L965 851 L969 849 L971 847 L975 845 L978 842 L981 840 L984 839 L987 837 L991 835 L994 834 L997 833 L997 830 L998 827 L1000 824 L1002 820 L1004 816 L1006 812 L1009 807 L1011 803 L1012 799 L1014 796 L1016 792 L1017 788 L1019 784 L1020 780 L1020 775 L1020 771 L1019 768 L1016 766 L1012 765 L1007 767 L1005 769 L1002 770 L998 773 L994 775 L991 778 L987 781 L984 783 L981 786 M966 805 L963 805 L959 806 L957 807 L953 809 L950 811 L946 813 L943 814 L939 817 L937 819 L935 821 L932 824 L929 827 L926 830 L924 833 L920 835 L918 839 L915 842 L912 845 L909 848 L907 851 L904 855 L902 857 L900 861 L898 864 L895 866 L893 869 L891 872 L889 876 L887 881 L885 885 L883 887 L881 890 L879 894 L878 898 L877 902 L878 905 L880 908 L884 910 L887 912 L891 911 L895 911 L899 910 L903 910 L908 908 L911 906 L915 905 L918 902 L922 900 L924 899 L928 896 L931 894 L933 892 L937 890 L940 887 L942 885 L946 882 L949 881 L952 878 L955 876 L958 873 L960 872 L964 869 L967 867 L970 865 L973 862 L977 860 L979 859 L983 856 L986 855 L989 851 L992 850 L996 847 L999 845 L1004 845 L1005 843 L1007 840 L1009 837 L1010 833 L1011 830 L1013 827 L1015 822 L1017 819 L1019 815 L1021 811 L1023 807 L1024 804 L1026 799 L1028 795 L1028 792 L1028 788 L1028 783 L1027 781 L1024 779 L1020 778 L1017 780 L1014 781 L1010 783 L1008 785 L1004 788 L1000 791 L997 792 L994 795 L991 798 M977 817 L974 817 L971 818 L967 819 L963 821 L960 823 L956 825 L952 828 L949 831 L945 834 L943 837 L939 839 L937 842 L933 846 L931 848 L929 851 L926 855 L924 858 L921 861 L918 864 L915 868 L913 871 L911 874 L908 877 L905 882 L904 885 L901 890 L899 894 L896 897 L894 901 L892 904 L891 909 L893 912 L896 915 L899 918 L905 917 L908 918 L914 917 L916 916 L920 915 L925 913 L929 911 L933 909 L936 906 L940 904 L943 901 L946 899 L949 897 L952 896 L955 894 L958 891 L960 889 L963 887 L967 885 L969 882 L973 880 L975 878 L978 875 L981 874 L984 872 L988 870 L990 867 L994 865 L999 862 L1003 860 L1006 856 L1009 855 L1013 854 L1015 853 L1016 850 L1017 847 L1018 843 L1020 840 L1022 837 L1024 833 L1026 829 L1028 826 L1029 822 L1031 819 L1033 815 L1034 812 L1036 807 L1036 803 L1037 800 L1037 796 L1035 793 L1033 792 L1029 791 L1025 792 L1023 794 L1019 796 L1017 797 L1013 800 L1010 803 L1007 805 L1004 807 L1001 810 M988 828 L984 829 L979 831 L975 832 L972 835 L968 837 L965 838 L961 842 L958 844 L955 847 L953 850 L949 853 L947 856 L944 859 L941 862 L940 865 L937 868 L935 871 L933 874 L930 877 L928 879 L925 882 L922 887 L920 889 L918 893 L916 897 L913 901 L911 906 L909 909 L908 912 L907 915 L908 919 L911 922 L914 923 L919 924 L923 924 L928 924 L930 923 L935 921 L938 921 L942 918 L946 916 L949 914 L953 911 L956 908 L960 906 L964 903 L967 900 L972 897 L975 895 L979 892 L983 889 L986 886 L990 883 L994 881 L998 878 L1001 876 L1004 874 L1008 871 L1012 869 L1016 867 L1019 864 L1024 863 L1026 859 L1027 855 L1029 851 L1031 847 L1032 844 L1034 840 L1037 837 L1038 834 L1040 830 L1041 827 L1042 823 L1044 819 L1045 815 L1046 812 L1045 808 L1044 805 L1041 804 L1037 804 L1033 806 L1029 807 L1026 810 L1023 813 L1020 814 L1016 817 L1014 820 L1011 822 M999 840 L995 841 L990 842 L987 843 L983 846 L980 847 L976 849 L974 852 L970 855 L968 858 L965 860 L962 864 L959 866 L957 869 L954 873 L952 877 L949 880 L946 883 L944 886 L941 889 L939 891 L936 894 L935 898 L932 902 L931 905 L929 909 L926 912 L925 916 L923 919 L923 923 L923 925 L925 928 L929 930 L934 930 L937 930 L941 930 L945 929 L949 928 L952 926 L955 924 L959 923 L962 921 L966 918 L969 916 L973 914 L977 911 L980 908 L983 905 L987 903 L990 900 L994 898 L998 896 L1001 892 L1004 889 L1008 888 L1011 884 L1015 883 L1019 881 L1022 878 L1026 876 L1029 874 L1033 872 L1035 869 L1036 864 L1038 861 L1040 858 L1041 855 L1043 850 L1046 846 L1047 843 L1049 839 L1051 835 L1053 831 L1053 828 L1054 825 L1054 821 L1052 818 L1049 817 L1046 817 L1042 818 L1038 821 L1035 823 L1031 826 L1028 828 L1024 831 L1021 834 M1010 851 L1005 852 L1002 853 L998 854 L995 857 L991 858 L989 861 L986 863 L983 865 L981 868 L978 871 L975 874 L973 877 L970 880 L968 882 L965 885 L963 889 L961 892 L958 894 L956 897 L953 900 L951 903 L949 906 L948 909 L945 913 L944 917 L941 921 L940 923 L938 927 L938 929 L938 932 L941 935 L945 936 L948 937 L952 936 L956 936 L959 936 L963 934 L965 934 L968 932 L972 929 L975 927 L979 925 L982 923 L985 920 L989 919 L992 915 L996 914 L999 911 L1002 909 L1004 906 L1009 903 L1012 901 L1015 899 L1018 896 L1021 894 L1024 891 L1028 890 L1031 888 L1035 885 L1039 883 L1041 882 L1044 879 L1046 875 L1046 872 L1048 869 L1050 865 L1052 862 L1054 858 L1056 854 L1058 850 L1058 846 L1060 843 L1061 840 L1061 837 L1061 833 L1060 831 L1057 829 L1054 830 L1051 832 L1047 833 L1043 835 L1041 838 L1036 840 L1034 843 L1030 845" fill="none" stroke="#00ff00" stroke-width="1.5"/><path d="M608 455 L613 455 L616 454 L618 452 L619 448 L619 444 L621 440 L622 437 L625 433 L627 429 L629 426 L631 422 L632 419 L634 415 L636 412 L637 409 L639 405 L641 402 L642 399 M441 519 L440 522 L438 525 L437 528 L436 530 L435 533 L434 535 L434 538 L434 541 L434 543 L435 546 L436 549 L437 551 L439 553 L441 555 L443 557 L446 558 L448 558 L451 557 L454 557 L457 556 M621 469 L625 469 L629 468 L631 465 L631 461 L632 457 L633 454 L635 450 L637 446 L640 442 L642 439 L643 435 L645 432 L647 428 L648 425 L650 421 L652 418 L653 415 L655 411 M453 533 L451 536 L449 539 L448 542 L447 544 L446 547 L445 549 L445 552 L445 555 L445 558 L446 560 L447 563 L448 565 L450 567 L452 569 L454 571 L457 572 L460 572 L463 572 L466 571 L469 571 M633 482 L638 482 L642 481 L643 478 L644 474 L645 471 L646 467 L648 463 L650 459 L652 455 L655 452 L656 448 L658 444 L660 441 L661 438 L663 434 L665 431 L666 427 L668 424 M464 547 L462 550 L461 553 L459 555 L458 558 L457 561 L456 563 L456 566 L456 569 L456 572 L457 574 L458 577 L459 579 L461 581 L463 583 L465 585 L468 586 L471 586 L474 586 L477 585 L480 585 M646 495 L651 495 L654 494 L656 491 L657 487 L658 483 L659 480 L661 476 L663 472 L665 468 L667 464 L669 461 L671 457 L672 454 L674 450 L676 447 L677 443 L679 440 L681 437 M475 561 L473 563 L472 566 L470 569 L469 572 L468 574 L468 577 L467 579 L468 582 L468 585 L468 588 L469 591 L471 593 L472 595 L474 597 L477 599 L479 600 L482 600 L485 599 L488 599 L491 598 M659 508 L663 508 L667 507 L669 504 L669 500 L670 496 L671 493 L673 489 L675 486 L676 483 L678 480 L680 477 L682 473 L683 470 L685 466 L687 463 L688 459 L690 456 L692 453 L694 449 M486 574 L485 577 L483 580 L482 582 L480 585 L479 588 L479 590 L479 593 L479 596 L479 599 L479 602 L481 604 L482 606 L484 609 L486 611 L488 612 L491 613 L494 614 L497 613 L500 612 L503 612 M671 521 L676 521 L679 520 L681 517 L682 513 L683 509 L684 505 L685 502 L687 499 L689 496 L691 493 L693 489 L694 486 L696 482 L698 479 L699 475 L701 472 L703 468 L705 465 L706 462 M498 587 L496 590 L495 593 L493 596 L492 598 L491 601 L490 603 L490 606 L490 609 L491 612 L491 615 L492 617 L493 620 L495 622 L497 624 L500 626 L502 627 L505 627 L508 626 L511 626 L514 625 M684 533 L688 533 L692 532 L694 529 L695 526 L695 522 L696 518 L698 515 L700 511 L702 508 L704 505 L705 502 L707 498 L709 495 L710 491 L712 488 L714 484 L716 481 L717 477 L719 474 M509 600 L508 603 L506 606 L505 609 L503 611 L502 614 L502 616 L502 619 L502 622 L502 625 L503 628 L504 630 L505 633 L507 635 L509 637 L511 639 L514 640 L517 640 L520 639 L523 639 L526 638 M696 546 L701 546 L704 545 L706 542 L707 538 L708 534 L709 530 L710 527 L712 524 L714 521 L716 518 L718 514 L720 511 L721 507 L723 504 L725 500 L726 497 L728 493 L730 490 L732 486 M521 613 L520 616 L518 619 L517 622 L515 624 L514 627 L514 629 L514 632 L514 635 L514 638 L514 641 L515 643 L517 646 L518 648 L521 650 L523 652 L526 653 L529 653 L532 652 L535 652 L538 651 M708 558 L713 558 L717 557 L719 554 L719 550 L720 546 L721 543 L723 539 L725 536 L727 533 L729 530 L730 527 L732 523 L734 519 L735 516 L737 512 L739 509 L741 505 L742 502 L744 498 M533 625 L532 628 L530 631 L528 634 L527 637 L526 639 L526 642 L525 645 L526 648 L526 651 L526 653 L527 656 L529 658 L530 661 L532 663 L535 664 L537 665 L540 665 L544 665 L547 664 L550 664 M721 571 L726 571 L729 570 L731 567 L732 563 L733 559 L734 555 L735 552 L737 548 L739 545 L741 542 L743 539 L745 535 L746 532 L748 528 L750 525 L751 521 L753 518 L755 514 L757 511 M545 638 L543 641 L542 644 L540 647 L539 649 L538 652 L537 654 L537 657 L538 660 L538 663 L538 666 L539 668 L541 671 L542 673 L544 675 L547 677 L549 678 L552 678 L555 677 L559 677 L562 676 M733 583 L738 583 L742 582 L743 579 L744 575 L745 571 L746 567 L748 564 L750 561 L751 557 L753 554 L755 551 L757 547 L758 544 L760 540 L762 537 L764 533 L765 530 L767 526 L769 523 M557 650 L556 653 L554 656 L552 659 L551 662 L550 664 L550 667 L550 669 L550 672 L550 675 L550 678 L551 681 L553 683 L554 685 L557 687 L559 689 L562 690 L564 690 L568 689 L571 689 L574 688 M745 595 L750 595 L754 594 L756 591 L756 587 L757 583 L758 579 L760 576 L762 573 L764 569 L766 566 L767 563 L769 559 L771 556 L772 552 L774 549 L776 545 L778 542 L779 538 L781 535 M569 662 L568 665 L566 668 L565 671 L563 674 L562 676 L562 679 L562 682 L562 684 L562 687 L562 690 L564 693 L565 695 L567 697 L569 699 L571 701 L574 702 L577 702 L580 701 L583 701 L586 700 M758 607 L762 607 L766 606 L768 603 L769 599 L769 595 L770 591 L772 588 L774 585 L776 581 L778 578 L780 575 L781 571 L783 568 L785 564 L786 561 L788 557 L790 554 L792 550 L793 547 M582 674 L580 677 L579 680 L577 683 L576 686 L575 688 L574 691 L574 693 L574 696 L574 699 L575 702 L576 704 L577 707 L579 709 L581 711 L584 712 L586 714 L589 714 L592 713 L595 713 L598 712 M770 618 L774 618 L778 617 L780 615 L781 611 L781 607 L783 603 L784 600 L786 596 L788 593 L790 590 L792 587 L793 583 L795 580 L797 576 L798 573 L800 569 L802 566 L804 562 L805 559 M594 686 L593 689 L591 692 L589 694 L588 697 L587 700 L587 702 L587 705 L587 708 L587 711 L587 713 L588 716 L590 718 L591 720 L594 722 L596 724 L599 725 L601 725 L604 725 L607 724 L611 724 M782 630 L786 630 L790 629 L792 626 L793 622 L793 618 L795 615 L796 611 L798 608 L800 605 L802 602 L804 599 L805 595 L807 591 L809 588 L810 584 L812 581 L814 577 L816 574 L817 570 M607 697 L605 700 L604 703 L602 706 L601 709 L600 711 L599 714 L599 716 L599 719 L599 722 L600 725 L601 727 L602 729 L604 732 L606 733 L609 735 L611 736 L614 736 L617 736 L620 735 L623 735 M794 642 L798 642 L802 641 L804 638 L805 634 L805 630 L806 626 L808 623 L810 620 L812 617 L814 614 L815 610 L817 607 L819 603 L820 600 L822 596 L824 593 L826 589 L827 586 L829 582 M619 709 L618 711 L616 714 L615 717 L613 720 L612 722 L612 725 L612 728 L612 730 L612 733 L613 736 L614 738 L615 740 L617 743 L619 744 L621 746 L624 747 L627 747 L630 747 L633 746 L635 746 M805 653 L810 653 L814 652 L816 649 L816 645 L817 642 L818 638 L820 635 L822 631 L824 628 L825 625 L827 622 L829 618 L830 615 L832 611 L834 608 L836 604 L837 601 L839 598 L841 594 M632 720 L631 723 L629 725 L627 728 L626 731 L625 733 L625 736 L625 739 L625 741 L625 744 L626 747 L627 749 L628 751 L630 753 L632 755 L634 757 L637 758 L639 758 L642 757 L645 757 L648 756 M817 665 L822 665 L826 664 L827 661 L828 657 L829 653 L830 649 L831 646 L833 643 L835 640 L837 637 L839 634 L840 630 L842 627 L844 623 L845 620 L847 616 L849 613 L851 609 L852 606 M645 731 L644 733 L642 736 L640 739 L639 742 L638 744 L638 747 L638 749 L638 752 L638 755 L639 757 L640 760 L641 762 L643 764 L645 766 L647 767 L649 768 L652 768 L655 768 L658 767 L661 767 M829 676 L834 676 L837 675 L839 672 L840 668 L840 664 L842 661 L844 657 L846 653 L848 649 L850 645 L852 642 L854 638 L855 635 L857 631 L859 628 L860 624 L862 621 L864 618 M658 741 L657 744 L655 747 L653 750 L652 753 L651 755 L651 757 L651 760 L651 763 L651 765 L652 768 L653 770 L654 772 L656 774 L658 776 L660 777 L662 778 L665 779 L668 778 L671 778 L674 777 M841 687 L845 687 L849 686 L850 683 L851 680 L852 676 L853 672 L855 668 L857 664 L860 661 L862 657 L863 653 L865 650 L867 646 L868 643 L870 639 L872 636 L873 633 L875 629 M671 752 L670 755 L668 758 L667 760 L665 763 L664 766 L664 768 L664 771 L664 775 L665 778 L666 780 L667 782 L669 784 L671 786 L673 787 L675 788 L678 789 L681 788 L684 788 L686 787 M852 698 L857 698 L860 697 L862 694 L863 691 L863 687 L864 683 L866 679 L869 676 L871 672 L873 668 L875 665 L876 661 L878 658 L879 654 L881 651 L883 648 L884 644 L886 641 M684 762 L683 765 L681 768 L680 771 L679 773 L678 776 L677 778 L677 781 L678 785 L678 788 L680 791 L682 794 L684 796 L686 797 L689 798 L691 798 L694 798 L697 798 L699 797 M863 709 L868 709 L871 708 L873 706 L874 702 L875 698 L876 694 L877 691 L880 687 L882 683 L884 680 L886 676 L887 673 L889 669 L890 666 L892 663 L894 659 L895 656 L897 653 M698 773 L696 775 L695 778 L693 781 L692 783 L691 786 L691 788 L691 791 L691 795 L692 798 L693 801 L695 804 L698 805 L700 807 L702 808 L705 808 L707 807 L710 807 L713 807 M875 720 L879 720 L883 719 L884 716 L885 713 L886 709 L887 705 L889 702 L891 698 L893 694 L895 691 L897 687 L898 684 L900 680 L902 676 L904 672 L906 668 L908 664 M711 783 L710 785 L708 788 L707 791 L706 793 L705 796 L704 798 L704 801 L705 804 L705 807 L707 810 L709 813 L711 815 L713 816 L715 817 L718 817 L720 817 L723 816 L726 816 M886 731 L890 731 L894 730 L895 727 L896 724 L897 720 L898 716 L899 713 L902 709 L904 706 L906 702 L907 699 L909 695 L911 691 L913 688 L915 684 L917 680 L919 676 M725 793 L723 795 L722 798 L720 801 L719 803 L718 805 L718 808 L718 811 L718 814 L719 817 L721 820 L723 822 L726 825 L729 826 L732 826 L736 826 L739 825 M897 742 L901 742 L904 741 L906 738 L907 735 L907 731 L909 727 L910 724 L912 720 L915 717 L917 713 L918 710 L920 706 L921 703 L923 699 L925 695 L927 691 L929 688 M738 802 L737 805 L736 808 L734 810 L733 813 L732 815 L732 817 L732 820 L732 823 L733 826 L734 829 L737 831 L739 833 L742 835 L746 835 L749 835 L752 834 M908 752 L912 752 L915 751 L917 749 L917 745 L918 742 L919 738 L921 735 L923 731 L925 728 L927 724 L929 721 L930 718 L932 714 L934 710 L936 707 L937 703 L939 699 M752 812 L751 814 L749 817 L748 820 L747 823 L746 826 L746 829 L746 832 L747 835 L748 838 L750 840 L753 842 L756 843 L759 844 L762 843 L766 843 M918 763 L923 763 L926 762 L928 758 L929 754 L930 749 L931 746 L934 742 L936 739 L937 736 L939 732 L940 729 L942 725 L944 722 L946 718 L948 714 L950 711 M766 821 L765 824 L763 826 L762 829 L761 832 L760 835 L760 838 L760 841 L761 844 L762 846 L764 849 L767 851 L770 852 L773 852 L776 852 L779 851 M929 773 L933 773 L936 772 L938 769 L939 764 L940 760 L942 757 L944 753 L946 750 L948 747 L949 743 L951 740 L952 737 L954 733 L956 730 L958 726 L959 722 M780 830 L779 833 L777 835 L776 838 L775 841 L774 844 L774 847 L774 850 L775 852 L777 855 L779 857 L781 859 L784 860 L787 860 L790 860 L793 859 M940 784 L944 784 L947 783 L948 779 L949 775 L950 771 L952 767 L954 764 L956 761 L958 758 L959 755 L961 751 L962 748 L964 744 L966 741 L968 738 L969 734 M794 839 L793 842 L792 844 L790 847 L789 849 L788 853 L788 855 L789 858 L789 860 L791 863 L793 865 L795 867 L798 868 L801 868 L804 868 L806 868 M950 794 L954 794 L957 793 L959 790 L959 785 L961 782 L962 778 L964 775 L966 772 L968 769 L969 766 L971 762 L972 759 L974 756 L976 752 L977 749 L979 746 M809 848 L807 851 L806 853 L805 855 L803 858 L803 861 L803 865 L804 868 L805 871 L807 873 L809 875 L812 876 L815 876 L818 876 L820 875 M960 804 L964 804 L967 803 L969 800 L969 796 L971 792 L972 789 L974 786 L976 783 L978 780 L979 777 L980 774 L982 770 L983 767 L985 764 L987 761 L988 757 M823 857 L821 860 L820 863 L818 866 L817 870 L817 873 L818 876 L820 879 L821 881 L824 882 L826 883 L829 883 L831 883 L834 883 M971 814 L974 814 L977 813 L979 810 L979 806 L981 802 L983 798 L985 794 L987 791 L989 788 L990 784 L992 781 L994 777 L996 773 L998 769 M837 865 L836 868 L834 871 L833 874 L832 878 L832 881 L833 884 L834 886 L836 888 L838 890 L841 891 L844 891 L848 890 M981 824 L984 824 L987 823 L988 821 L989 817 L990 813 L992 809 L994 805 L997 801 L999 796 L1001 792 L1003 788 L1005 784 L1007 780 M852 874 L850 877 L849 879 L847 882 L847 886 L847 889 L848 891 L849 894 L851 895 L853 897 L855 898 L859 898 L862 897 M990 834 L994 834 L996 833 L998 831 L999 827 L1000 823 L1002 819 L1004 816 L1006 812 L1008 807 L1010 803 L1012 799 L1014 796 L1016 792 M866 882 L865 885 L863 887 L862 890 L861 893 L862 896 L862 899 L864 901 L865 902 L867 904 L870 905 L873 905 L876 904 M1000 844 L1003 844 L1006 843 L1007 841 L1008 837 L1009 834 L1011 830 L1013 826 L1015 822 L1017 818 L1019 814 L1021 811 L1023 807 L1024 804 M881 890 L880 892 L878 895 L877 898 L876 901 L877 904 L878 906 L880 909 L882 911 L884 911 L887 912 L890 911 M1010 854 L1013 854 L1015 853 L1017 851 L1017 847 L1018 844 L1020 840 L1022 837 L1024 833 L1026 829 L1028 825 L1030 822 L1031 819 L1033 815 M896 898 L895 900 L893 903 L892 905 L891 908 L892 911 L893 913 L895 916 L897 917 L899 918 L902 918 L905 918 M1019 864 L1024 863 L1026 859 L1027 854 L1029 851 L1031 848 L1033 844 L1035 840 L1036 837 L1038 833 L1040 830 L1041 827 M911 905 L910 908 L908 910 L907 913 L907 915 L907 918 L908 920 L910 922 L914 924 L916 924 L919 924 M1029 873 L1033 872 L1035 869 L1036 865 L1038 861 L1040 858 L1041 855 L1043 851 L1045 847 L1047 843 L1049 838 M926 913 L925 915 L924 917 L922 920 L922 923 L923 926 L925 929 L928 930 L931 931 L934 930 M1038 883 L1042 882 L1044 879 L1045 875 L1046 871 L1048 869 L1050 865 L1052 862 L1054 858 L1056 854 L1057 850 M941 920 L939 923 L938 926 L937 929 L938 932 L941 935 L943 936 L946 937 L948 936 M560 401 L572 413 L585 426 L597 439 L609 451 L621 464 L634 476 L646 488 L658 501 L670 513 L683 525 L695 537 L707 549 L719 561 L731 573 L744 584 L756 596 L768 608 L780 620 L792 631 L804 643 L816 655 L828 666 L840 678 L851 690 L863 701 L875 713 L886 724 L898 736 L909 747 L921 759 L932 770 L944 782 L955 793 L966 805 L977 817 L988 828 L999 840 L1010 851 M523 416 L535 429 L547 442 L559 455 L571 468 L583 480 L595 493 L607 505 L619 517 L631 529 L644 542 L656 554 L668 566 L680 577 L693 589 L705 601 L717 613 L730 624 L742 636 L754 648 L767 659 L779 671 L791 682 L804 693 L816 705 L829 716 L841 727 L853 739 L866 750 L878 761 L890 772 L903 783 L915 794 L927 805 L940 816 L952 827 L964 839 L976 850 L989 860 M474 470 L486 484 L497 497 L509 510 L520 523 L532 536 L544 549 L556 562 L568 574 L580 586 L592 599 L604 611 L616 622 L629 634 L641 646 L654 657 L666 669 L679 680 L692 691 L705 702 L718 713 L731 724 L744 735 L757 745 L770 756 L783 766 L796 777 L810 787 L823 797 L836 807 L850 817 L864 826 L877 836 L891 845 L905 855 L919 864 L932 874 L946 883 L960 892 M449 507 L461 521 L472 535 L483 548 L495 562 L506 575 L518 588 L530 600 L541 613 L553 625 L566 637 L578 650 L590 661 L603 673 L615 685 L628 696 L640 707 L653 718 L666 729 L679 740 L692 750 L706 761 L719 771 L733 781 L746 791 L760 801 L773 810 L787 820 L801 829 L815 838 L829 847 L844 856 L858 864 L872 873 L887 881 L901 889 L916 898 L931 905 L946 913 M435 530 L446 544 L458 558 L469 572 L480 585 L492 598 L503 612 L515 624 L527 637 L539 649 L551 662 L563 674 L575 686 L588 697 L600 709 L613 720 L626 731 L639 742 L652 753 L665 763 L678 773 L692 784 L705 793 L719 803 L733 813 L747 822 L761 831 L775 840 L789 849 L803 858 L818 866 L832 874 L847 882 L862 890 L877 898 L892 905 L907 912 L922 920 L938 926 M434 535 L445 549 L456 563 L467 577 L479 590 L490 603 L502 616 L513 629 L525 642 L537 654 L549 667 L562 679 L574 690 L586 702 L599 714 L612 725 L624 736 L637 747 L651 757 L664 768 L677 778 L690 788 L704 798 L718 808 L731 817 L745 826 L759 835 L774 844 L788 853 L802 861 L817 870 L831 878 L846 886 L861 893 L876 901 L891 908 L906 915 L921 922 L937 929 M445 558 L457 573 L468 587 L479 600 L490 614 L502 627 L514 640 L525 653 L537 666 L549 678 L561 690 L574 702 L586 714 L598 725 L611 737 L624 748 L636 758 L649 769 L662 779 L675 789 L689 799 L702 808 L715 818 L729 827 L742 835 L756 844 L770 852 L784 861 L798 869 L812 876 L826 884 L841 891 L855 898 L870 905 L884 912 L899 918 L914 925 L929 931 L944 937 M489 541 L501 555 L512 569 L524 583 L536 597 L548 610 L560 623 L571 636 L583 648 L596 661 L608 673 L620 685 L632 697 L645 709 L657 720 L669 731 L682 742 L695 753 L707 763 L720 774 L733 784 L745 794 L758 804 L771 813 L784 822 L797 832 L810 840 L823 849 L836 858 L849 866 L862 874 L876 882 L889 890 L902 897 L915 904 L929 911 L942 918 L956 925 L969 932 M540 503 L552 517 L564 531 L576 544 L588 557 L601 570 L613 583 L625 596 L637 609 L649 621 L661 633 L674 645 L686 657 L698 669 L710 680 L723 692 L735 703 L747 714 L759 725 L772 736 L784 746 L796 757 L808 767 L820 777 L832 787 L844 797 L856 807 L868 816 L880 825 L892 835 L904 844 L916 853 L928 861 L940 870 L952 878 L963 887 L975 895 L987 903 L998 911 M591 466 L604 480 L616 493 L629 506 L641 519 L653 532 L666 545 L678 557 L691 570 L703 582 L715 594 L727 606 L740 618 L752 630 L764 642 L776 653 L788 665 L800 676 L812 687 L823 698 L835 709 L847 720 L858 731 L869 742 L881 752 L892 763 L903 773 L914 783 L925 793 L936 803 L946 813 L957 823 L967 833 L978 843 L988 852 L998 862 L1008 871 L1018 880 L1028 889 M608 455 L621 469 L633 482 L646 495 L659 508 L671 521 L684 533 L696 546 L708 558 L721 571 L733 583 L745 595 L758 607 L770 618 L782 630 L794 642 L805 653 L817 665 L829 676 L841 687 L852 698 L863 709 L875 720 L886 731 L897 742 L908 752 L918 763 L929 773 L940 784 L950 794 L960 804 L971 814 L981 824 L990 834 L1000 844 L1010 854 L1019 864 L1029 873 L1038 883 M632 418 L645 431 L658 444 L671 457 L683 470 L696 482 L709 495 L721 507 L734 519 L746 532 L758 544 L771 556 L783 568 L795 580 L807 591 L819 603 L830 615 L842 627 L853 638 L865 650 L876 661 L887 673 L898 684 L909 695 L920 707 L930 718 L940 729 L951 740 L961 751 L970 763 L980 774 L990 785 L999 796 L1008 807 L1017 818 L1026 829 L1035 840 L1043 851 L1052 862 M647 387 L660 399 L673 412 L686 424 L699 437 L712 449 L724 461 L737 474 L749 486 L762 498 L774 510 L786 522 L799 534 L811 546 L823 558 L834 570 L846 582 L857 594 L869 605 L880 617 L891 629 L902 641 L913 653 L923 664 L934 676 L944 688 L954 700 L964 712 L974 724 L983 735 L993 747 L1002 759 L1011 771 L1019 783 L1028 795 L1036 807 L1045 819 L1053 831 L1060 843 M648 365 L661 377 L674 389 L687 402 L700 414 L713 426 L725 438 L738 451 L750 463 L763 475 L775 487 L788 499 L800 511 L812 523 L824 535 L835 547 L847 559 L859 571 L870 583 L881 595 L892 607 L903 619 L914 631 L924 643 L935 655 L945 668 L955 680 L965 692 L975 704 L984 717 L993 729 L1002 742 L1011 754 L1020 767 L1029 779 L1037 792 L1045 805 L1053 818 L1061 830 M595 391 L608 403 L620 416 L633 428 L645 441 L658 453 L670 466 L682 478 L695 490 L707 502 L719 514 L732 526 L744 538 L756 550 L768 562 L780 574 L792 586 L804 598 L816 609 L827 621 L839 633 L850 645 L862 657 L873 668 L884 680 L896 692 L907 704 L918 715 L928 727 L939 739 L950 751 L960 762 L971 774 L981 786 L991 798 L1001 810 L1011 822 L1021 834 L1030 845 M525 416 L1021 906 M526 426 L1012 906" fill="none" stroke="#00ff00" stroke-width="2"/></svg>
<div id="status" class="abs"><span id="st"><span class="w" style="left:-2.5px;transform:scaleX(1.092);">/</span><span class="w" style="left:9.59px;transform:scaleX(0.9121);">Users</span><span class="w" style="left:82.3px;transform:scaleX(1.0);">/</span><span class="w" style="left:93.38px;transform:scaleX(0.9207);">olivierlediouris</span><span class="w" style="left:286.5px;transform:scaleX(0.977);">/</span><span class="w" style="left:296.19px;transform:scaleX(0.9053);">repos</span><span class="w" style="left:368.5px;transform:scaleX(1.069);">/</span><span class="w" style="left:379.72px;transform:scaleX(0.8987);">ROB</span><span class="w" style="left:435.5px;transform:scaleX(1.069);">/</span><span class="w" style="left:445.73px;transform:scaleX(0.9327);">raspberry-sailor</span><span class="w" style="left:653.8px;transform:scaleX(1.1149);">/</span><span class="w" style="left:664.03px;transform:scaleX(0.894);">PolarSmoother</span><span class="w" style="left:849.3px;transform:scaleX(1.0805);">/</span><span class="w" style="left:860.34px;transform:scaleX(0.9702);">sample-files</span><span class="w" style="left:1024.4px;transform:scaleX(1.0345);">/</span><span class="w" style="left:1034.45px;transform:scaleX(0.8722);">CheoyL...</span></span></div>
</div>
</body></html>
